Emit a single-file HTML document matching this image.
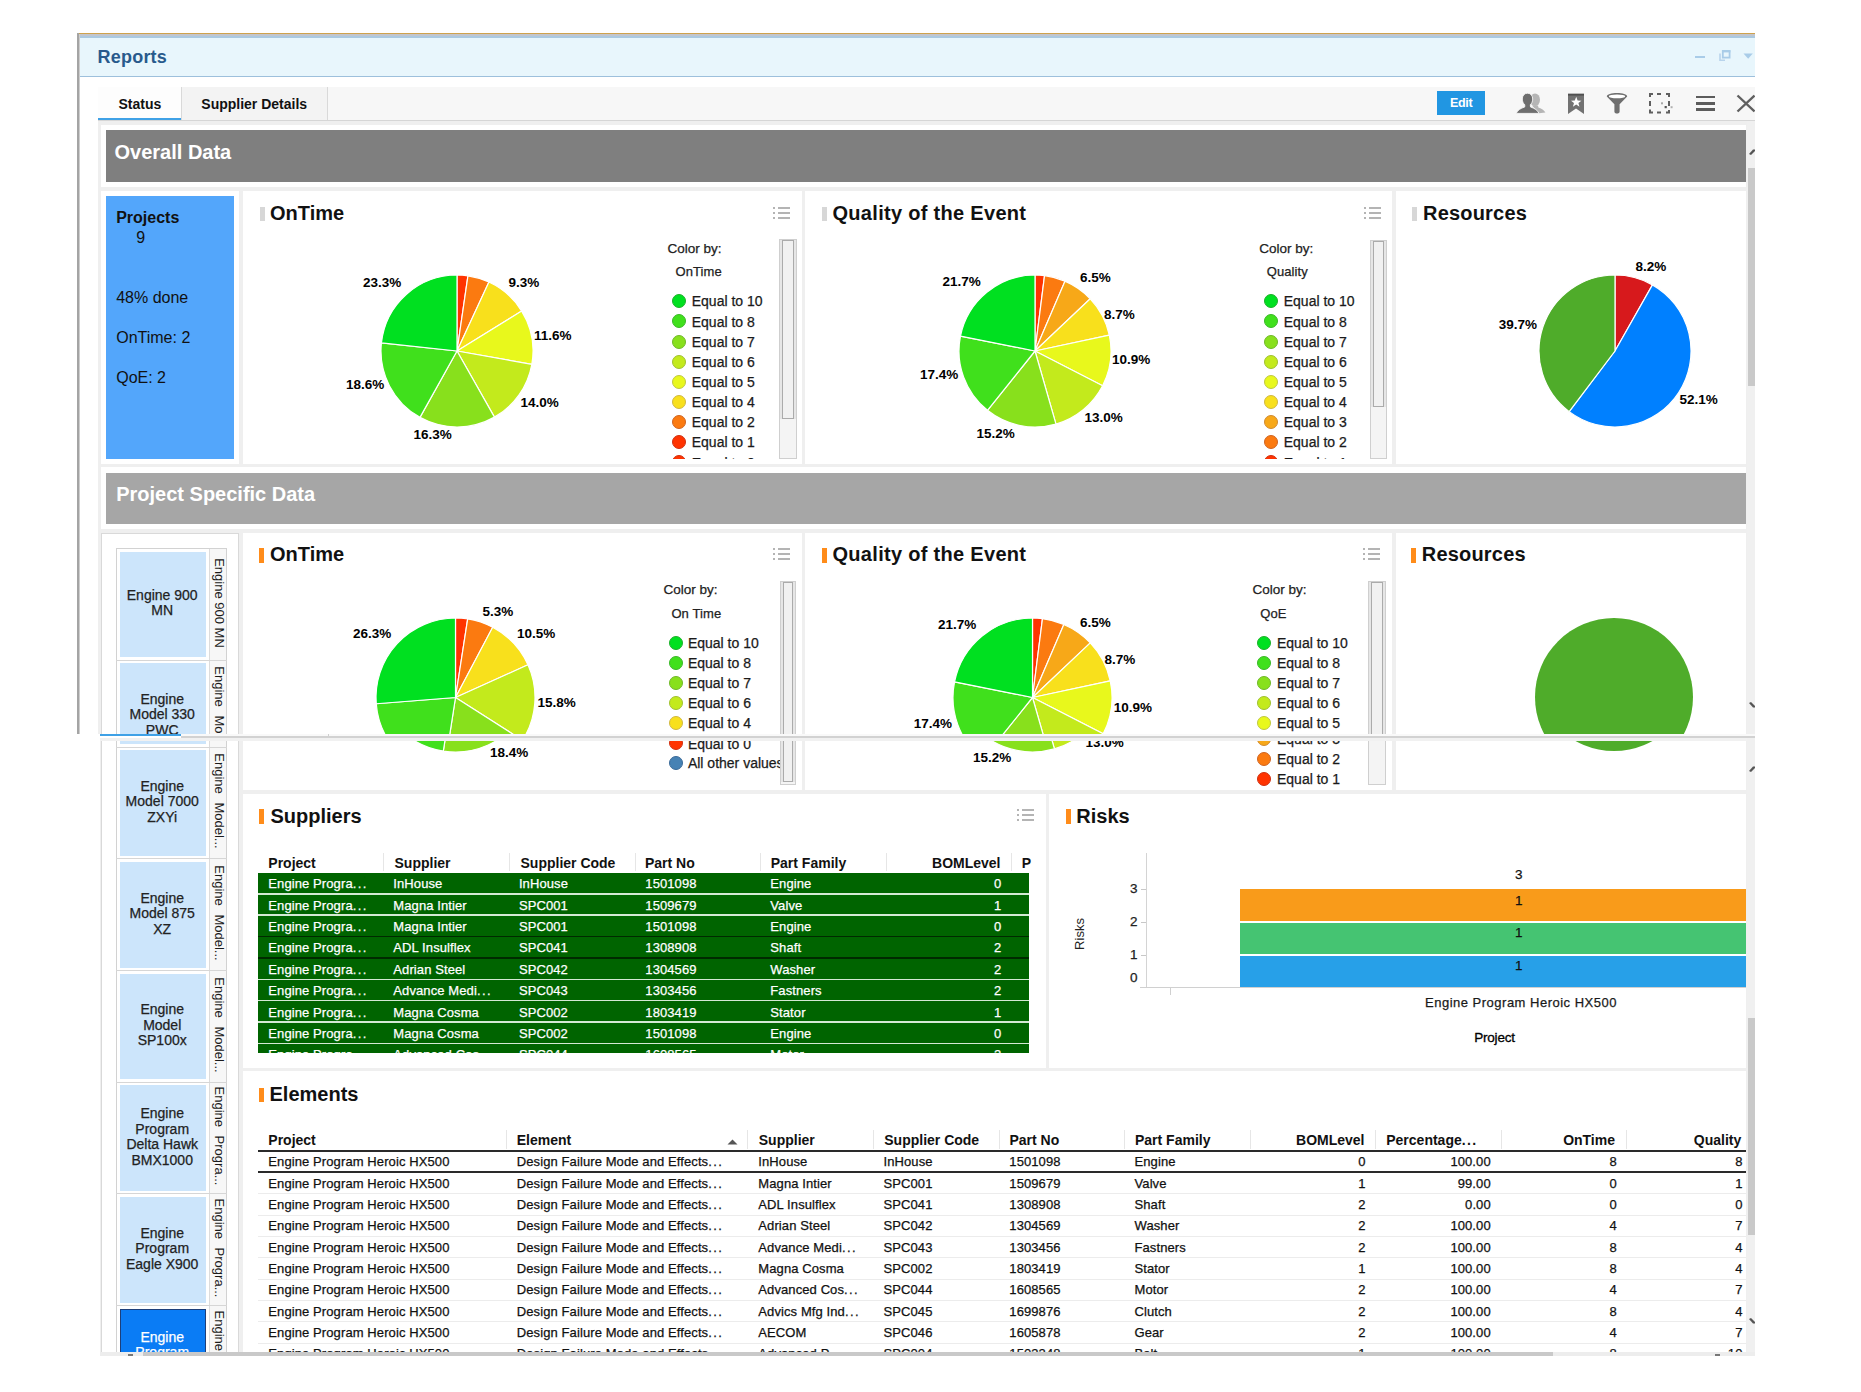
<!DOCTYPE html><html><head><meta charset="utf-8"><style>html,body{margin:0;padding:0}body{width:1861px;height:1392px;position:relative;overflow:hidden;background:#fff}</style></head><body>
<div style="position:absolute;left:0px;top:0px;width:1861px;height:734px;overflow:hidden"><div style="position:absolute;left:0px;top:0px;width:1861px;height:1392px">
<div style="position:absolute;left:77px;top:33px;width:1678px;height:1px;background:#cfa24c;"></div>
<div style="position:absolute;left:77px;top:34px;width:1678px;height:2px;background:#c2c5cc;"></div>
<div style="position:absolute;left:77px;top:36px;width:1678px;height:1.5px;background:#abc9e0;"></div>
<div style="position:absolute;left:77px;top:33px;width:1.5px;height:701px;background:#a4a4a4;"></div>
<div style="position:absolute;left:78.5px;top:34px;width:1.0px;height:700px;background:#cdcdcd;"></div>
<div style="position:absolute;left:79.5px;top:37.5px;width:1675.5px;height:38.5px;background:#e8f6fc;"></div>
<div style="position:absolute;left:79.5px;top:75.5px;width:1675.5px;height:1.5px;background:#9dc0dc;"></div>
<div style="position:absolute;left:97.6px;top:47.96px;font:bold 18px/18px 'Liberation Sans',sans-serif;color:#285a8c;white-space:nowrap;letter-spacing:0.2px">Reports</div>
<div style="position:absolute;left:1695px;top:55.5px;width:10px;height:2.5px;background:#a9cce8;"></div>
<svg style="position:absolute;left:1717px;top:49px" width="15" height="13" viewBox="0 0 15 13"><rect x="5.8" y="2" width="6.8" height="6.6" fill="none" stroke="#a9cce8" stroke-width="1.8"/><rect x="5" y="1.2" width="8.4" height="2.2" fill="#a9cce8"/><path d="M3,4.5 V11.2 H8" fill="none" stroke="#b8d4ec" stroke-width="1.6"/></svg>
<svg style="position:absolute;left:1743px;top:52.5px" width="11" height="7" viewBox="0 0 11 7"><path d="M0.5,0.5 H9.8 L5.15,5.8 Z" fill="#a9cce8"/></svg>
<div style="position:absolute;left:98px;top:87px;width:1657px;height:33px;background:#f7f7f7;"></div>
<div style="position:absolute;left:98px;top:87px;width:82.5px;height:31px;background:#fdfdfd;"></div>
<div style="position:absolute;left:180.5px;top:87px;width:1.0px;height:33px;background:#d9d9d9;"></div>
<div style="position:absolute;left:181.5px;top:87px;width:145.5px;height:33px;background:#f3f3f3;"></div>
<div style="position:absolute;left:327px;top:87px;width:1px;height:33px;background:#d9d9d9;"></div>
<div style="position:absolute;left:98px;top:118px;width:82.5px;height:2px;background:#3fa1e6;"></div>
<div style="position:absolute;left:98px;top:120px;width:1657px;height:1.2px;background:#d6d6d6;"></div>
<div style="position:absolute;left:118.5px;top:96.65px;font:bold 14px/14px 'Liberation Sans',sans-serif;color:#111;white-space:nowrap;">Status</div>
<div style="position:absolute;left:201.3px;top:96.65px;font:bold 14px/14px 'Liberation Sans',sans-serif;color:#111;white-space:nowrap;">Supplier Details</div>
<div style="position:absolute;left:1437.3px;top:90.8px;width:47.4px;height:24.7px;background:#2196e2;"></div>
<div style="position:absolute;left:961.2px;width:1000px;text-align:center;top:97.22px;font:bold 12.5px/12.5px 'Liberation Sans',sans-serif;color:#fff;white-space:nowrap;letter-spacing:-0.3px">Edit</div>
<svg style="position:absolute;left:1505px;top:85px" width="45" height="35" viewBox="0 0 45 35">
<ellipse cx="30" cy="14.8" rx="5" ry="6.3" fill="#b5b5b5"/>
<path d="M27,20.5 L33,20.5 L33.4,22.4 C37,23.6 39.6,25.4 40.4,27.6 L33.9,28.3 Z" fill="#b5b5b5"/>
<path d="M22.5,8.2 C25.8,8.2 27.7,10.8 27.7,14 C27.7,16.6 26.6,18.6 25.3,19.8 L25.5,22 C29.4,23.2 32.8,25.2 34,28.4 L11.2,28.4 C12.4,25.2 15.8,23.2 19.7,22 L19.8,19.8 C18.4,18.6 17.3,16.6 17.3,14 C17.3,10.8 19.2,8.2 22.5,8.2 Z" fill="#6e6e6e" stroke="#f7f7f7" stroke-width="0.9"/>
</svg>
<svg style="position:absolute;left:1567px;top:92.5px" width="18" height="22" viewBox="0 0 18 22">
<path d="M1,0.8 H17 V21 L9,15.6 L1,21 Z" fill="#727272"/><rect x="1" y="0.8" width="16" height="1.8" fill="#505050"/>
<path d="M9.2,3.8 L10.6,7.6 L14.4,7.7 L11.4,10.1 L12.5,13.8 L9.2,11.6 L5.9,13.8 L7,10.1 L4,7.7 L7.8,7.6 Z" fill="#fff"/>
</svg>
<svg style="position:absolute;left:1605px;top:92px" width="24" height="23" viewBox="0 0 24 23">
<path d="M1.8,4.5 C1.8,2.4 6.5,1.1 12,1.1 C17.5,1.1 22.2,2.4 22.2,4.5 L14.6,12.2 V19.8 C14.6,21 13.4,21.6 12,21.6 C10.6,21.6 9.4,21 9.4,19.8 V12.2 Z" fill="#6f6f6f"/>
<ellipse cx="12" cy="4.4" rx="8.2" ry="1.9" fill="#fff"/>
</svg>
<svg style="position:absolute;left:1648px;top:92px" width="28" height="23" viewBox="0 0 28 23">
<g stroke="#5f5f5f" stroke-width="2" fill="none">
<path d="M2,5 V2 H5"/><path d="M9,2 H13"/><path d="M18,2 H21 V5"/><path d="M2,9 V14"/><path d="M21,9 V14"/><path d="M2,17.5 V20.5 H5"/><path d="M9,20.5 H13"/><path d="M18,20.5 H21 V18"/>
</g>
<rect x="13" y="10.3" width="2" height="2" fill="#a8a8a8"/><rect x="16.6" y="14" width="2.2" height="2.2" fill="#555"/><rect x="22.6" y="14.2" width="2" height="2" fill="#b0b0b0"/>
</svg>
<div style="position:absolute;left:1696px;top:95.6px;width:19px;height:2.6px;background:#5c5c5c;"></div>
<div style="position:absolute;left:1696px;top:102px;width:19px;height:2.6px;background:#5c5c5c;"></div>
<div style="position:absolute;left:1696px;top:108.3px;width:19px;height:2.6px;background:#5c5c5c;"></div>
<svg style="position:absolute;left:1736px;top:94px" width="19" height="19" viewBox="0 0 19 19">
<path d="M1.5,1.5 L18.5,17.5 M18.5,1.5 L1.5,17.5" stroke="#606060" stroke-width="2.4"/></svg>
<div style="position:absolute;left:98px;top:121.2px;width:1649px;height:612.8px;background:#efefef;"></div>
<div style="position:absolute;left:1747px;top:121.2px;width:8px;height:612.8px;background:#f0f0f0;"></div>
<div style="position:absolute;left:1748px;top:167.5px;width:7px;height:218.5px;background:#c9c9c9;"></div>
<svg style="position:absolute;left:1748px;top:147px" width="7" height="10" viewBox="0 0 7 10"><path d="M1,7 L5,2.5 L7,2.5 L7,4 L3,8 Z" fill="#555"/></svg>
<svg style="position:absolute;left:1748px;top:701px" width="7" height="10" viewBox="0 0 7 10"><path d="M1,2 L5,6.5 L7,6.5 L7,5 L3,1 Z" fill="#555"/></svg>
<div style="position:absolute;left:101px;top:124.5px;width:1645px;height:62.5px;background:#ffffff;"></div>
<div style="position:absolute;left:106px;top:130px;width:1640px;height:52px;background:#7f7f7f;"></div>
<div style="position:absolute;left:114.5px;top:141.87px;font:bold 20px/20px 'Liberation Sans',sans-serif;color:#fff;white-space:nowrap;">Overall Data</div>
<div style="position:absolute;left:101px;top:191px;width:138px;height:273px;background:#fff;"></div>
<div style="position:absolute;left:106px;top:196.2px;width:128px;height:262.6px;background:#53a6fb;"></div>
<div style="position:absolute;left:116.2px;top:209.76px;font:bold 16px/16px 'Liberation Sans',sans-serif;color:#111;white-space:nowrap;">Projects</div>
<div style="position:absolute;left:136.2px;top:229.76px;font:normal 16px/16px 'Liberation Sans',sans-serif;color:#111;white-space:nowrap;">9</div>
<div style="position:absolute;left:116.2px;top:290.26px;font:normal 16px/16px 'Liberation Sans',sans-serif;color:#111;white-space:nowrap;">48% done</div>
<div style="position:absolute;left:116.2px;top:330.26px;font:normal 16px/16px 'Liberation Sans',sans-serif;color:#111;white-space:nowrap;">OnTime: 2</div>
<div style="position:absolute;left:116.2px;top:370.26px;font:normal 16px/16px 'Liberation Sans',sans-serif;color:#111;white-space:nowrap;">QoE: 2</div>
<div style="position:absolute;left:242.5px;top:191px;width:559.5px;height:273px;background:#fff;"></div>
<div style="position:absolute;left:259.5px;top:206.8px;width:5px;height:14.5px;background:#d7d7d7;"></div>
<div style="position:absolute;left:270px;top:203.07px;font:bold 20px/20px 'Liberation Sans',sans-serif;color:#111;white-space:nowrap;">OnTime</div>
<div style="position:absolute;left:773px;top:206.6px;width:2px;height:2px;background:#b4b4b4;"></div>
<div style="position:absolute;left:778px;top:206.6px;width:12px;height:2px;background:#b4b4b4;"></div>
<div style="position:absolute;left:773px;top:211.6px;width:2px;height:2px;background:#b4b4b4;"></div>
<div style="position:absolute;left:778px;top:211.6px;width:12px;height:2px;background:#b4b4b4;"></div>
<div style="position:absolute;left:773px;top:216.6px;width:2px;height:2px;background:#b4b4b4;"></div>
<div style="position:absolute;left:778px;top:216.6px;width:12px;height:2px;background:#b4b4b4;"></div>
<svg style="position:absolute;left:379.2px;top:272.5px" width="156" height="156" viewBox="0 0 156 156"><path d="M78,78 L78.00,2.00 A76,76 0 0 1 88.94,2.79 Z" fill="#ff3300" stroke="#fff" stroke-width="1.2" stroke-linejoin="round"/><path d="M78,78 L88.94,2.79 A76,76 0 0 1 109.93,9.03 Z" fill="#fb7a10" stroke="#fff" stroke-width="1.2" stroke-linejoin="round"/><path d="M78,78 L109.93,9.03 A76,76 0 0 1 142.68,38.09 Z" fill="#f8e01c" stroke="#fff" stroke-width="1.2" stroke-linejoin="round"/><path d="M78,78 L142.68,38.09 A76,76 0 0 1 152.83,91.30 Z" fill="#e8f81c" stroke="#fff" stroke-width="1.2" stroke-linejoin="round"/><path d="M78,78 L152.83,91.30 A76,76 0 0 1 115.45,144.13 Z" fill="#c3ea1c" stroke="#fff" stroke-width="1.2" stroke-linejoin="round"/><path d="M78,78 L115.45,144.13 A76,76 0 0 1 40.97,144.37 Z" fill="#88e01c" stroke="#fff" stroke-width="1.2" stroke-linejoin="round"/><path d="M78,78 L40.97,144.37 A76,76 0 0 1 2.43,69.90 Z" fill="#40e01c" stroke="#fff" stroke-width="1.2" stroke-linejoin="round"/><path d="M78,78 L2.43,69.90 A76,76 0 0 1 78.00,2.00 Z" fill="#00e020" stroke="#fff" stroke-width="1.2" stroke-linejoin="round"/></svg>
<div style="position:absolute;left:363px;top:276.27px;font:bold 13.5px/13.5px 'Liberation Sans',sans-serif;color:#000;white-space:nowrap;">23.3%</div>
<div style="position:absolute;left:508.5px;top:276.27px;font:bold 13.5px/13.5px 'Liberation Sans',sans-serif;color:#000;white-space:nowrap;">9.3%</div>
<div style="position:absolute;left:534px;top:329.27px;font:bold 13.5px/13.5px 'Liberation Sans',sans-serif;color:#000;white-space:nowrap;">11.6%</div>
<div style="position:absolute;left:520.5px;top:395.77px;font:bold 13.5px/13.5px 'Liberation Sans',sans-serif;color:#000;white-space:nowrap;">14.0%</div>
<div style="position:absolute;left:413.5px;top:428.27px;font:bold 13.5px/13.5px 'Liberation Sans',sans-serif;color:#000;white-space:nowrap;">16.3%</div>
<div style="position:absolute;left:346px;top:378.27px;font:bold 13.5px/13.5px 'Liberation Sans',sans-serif;color:#000;white-space:nowrap;">18.6%</div>
<div style="position:absolute;left:667.5px;top:241.57px;font:normal 13.5px/13.5px 'Liberation Sans',sans-serif;color:#222;white-space:nowrap;;-webkit-text-stroke:0.25px">Color by:</div>
<div style="position:absolute;left:675.5px;top:265.4px;font:normal 13px/13px 'Liberation Sans',sans-serif;color:#222;white-space:nowrap;;-webkit-text-stroke:0.25px;letter-spacing:0.1px">OnTime</div>
<div style="position:absolute;left:660px;top:285px;width:119px;height:174px;overflow:hidden"><div style="position:absolute;left:-660px;top:-285px;width:1861px;height:1392px">
<div style="position:absolute;left:672.25px;top:294.25px;width:12px;height:12px;border-radius:50%;background:#00e020;border:1px solid #1cb02a"></div>
<div style="position:absolute;left:691.75px;top:294.4px;font:normal 14px/14px 'Liberation Sans',sans-serif;color:#1a1a1a;white-space:nowrap;;-webkit-text-stroke:0.25px">Equal to 10</div>
<div style="position:absolute;left:672.25px;top:314.4px;width:12px;height:12px;border-radius:50%;background:#40e01c;border:1px solid #3ab828"></div>
<div style="position:absolute;left:691.75px;top:314.55px;font:normal 14px/14px 'Liberation Sans',sans-serif;color:#1a1a1a;white-space:nowrap;;-webkit-text-stroke:0.25px">Equal to 8</div>
<div style="position:absolute;left:672.25px;top:334.55px;width:12px;height:12px;border-radius:50%;background:#88e01c;border:1px solid #70b828"></div>
<div style="position:absolute;left:691.75px;top:334.7px;font:normal 14px/14px 'Liberation Sans',sans-serif;color:#1a1a1a;white-space:nowrap;;-webkit-text-stroke:0.25px">Equal to 7</div>
<div style="position:absolute;left:672.25px;top:354.7px;width:12px;height:12px;border-radius:50%;background:#c3ea1c;border:1px solid #a0c030"></div>
<div style="position:absolute;left:691.75px;top:354.85px;font:normal 14px/14px 'Liberation Sans',sans-serif;color:#1a1a1a;white-space:nowrap;;-webkit-text-stroke:0.25px">Equal to 6</div>
<div style="position:absolute;left:672.25px;top:374.85px;width:12px;height:12px;border-radius:50%;background:#e8f81c;border:1px solid #c0c840"></div>
<div style="position:absolute;left:691.75px;top:375.0px;font:normal 14px/14px 'Liberation Sans',sans-serif;color:#1a1a1a;white-space:nowrap;;-webkit-text-stroke:0.25px">Equal to 5</div>
<div style="position:absolute;left:672.25px;top:395.0px;width:12px;height:12px;border-radius:50%;background:#f8e01c;border:1px solid #d0b840"></div>
<div style="position:absolute;left:691.75px;top:395.15px;font:normal 14px/14px 'Liberation Sans',sans-serif;color:#1a1a1a;white-space:nowrap;;-webkit-text-stroke:0.25px">Equal to 4</div>
<div style="position:absolute;left:672.25px;top:415.15px;width:12px;height:12px;border-radius:50%;background:#fb7a10;border:1px solid #d06420"></div>
<div style="position:absolute;left:691.75px;top:415.3px;font:normal 14px/14px 'Liberation Sans',sans-serif;color:#1a1a1a;white-space:nowrap;;-webkit-text-stroke:0.25px">Equal to 2</div>
<div style="position:absolute;left:672.25px;top:435.3px;width:12px;height:12px;border-radius:50%;background:#ff3300;border:1px solid #d03010"></div>
<div style="position:absolute;left:691.75px;top:435.45px;font:normal 14px/14px 'Liberation Sans',sans-serif;color:#1a1a1a;white-space:nowrap;;-webkit-text-stroke:0.25px">Equal to 1</div>
<div style="position:absolute;left:672.25px;top:455.45px;width:12px;height:12px;border-radius:50%;background:#ff3300;border:1px solid #d03010"></div>
<div style="position:absolute;left:691.75px;top:455.6px;font:normal 14px/14px 'Liberation Sans',sans-serif;color:#1a1a1a;white-space:nowrap;;-webkit-text-stroke:0.25px">Equal to 0</div>
</div></div>
<div style="position:absolute;left:779px;top:239.2px;width:18px;height:219.8px;background:#f4f4f4;box-sizing:border-box;border:1px solid #cfcfcf"></div>
<div style="position:absolute;left:780px;top:240.2px;width:16px;height:179.3px;background:#e6e6e6;"></div>
<div style="position:absolute;left:782px;top:240.2px;width:12px;height:179.3px;background:#f1f1f1;box-sizing:border-box;border:1px solid #ababab"></div>
<div style="position:absolute;left:805px;top:191px;width:587px;height:273px;background:#fff;"></div>
<div style="position:absolute;left:822px;top:206.8px;width:5px;height:14.5px;background:#d7d7d7;"></div>
<div style="position:absolute;left:832.5px;top:203.07px;font:bold 20px/20px 'Liberation Sans',sans-serif;color:#111;white-space:nowrap;letter-spacing:0.3px">Quality of the Event</div>
<div style="position:absolute;left:1363.5px;top:206.6px;width:2px;height:2px;background:#b4b4b4;"></div>
<div style="position:absolute;left:1368.5px;top:206.6px;width:12px;height:2px;background:#b4b4b4;"></div>
<div style="position:absolute;left:1363.5px;top:211.6px;width:2px;height:2px;background:#b4b4b4;"></div>
<div style="position:absolute;left:1368.5px;top:211.6px;width:12px;height:2px;background:#b4b4b4;"></div>
<div style="position:absolute;left:1363.5px;top:216.6px;width:2px;height:2px;background:#b4b4b4;"></div>
<div style="position:absolute;left:1368.5px;top:216.6px;width:12px;height:2px;background:#b4b4b4;"></div>
<svg style="position:absolute;left:956.5px;top:272.75px" width="156" height="156" viewBox="0 0 156 156"><path d="M78,78 L78.00,2.00 A76,76 0 0 1 87.53,2.60 Z" fill="#ff3300" stroke="#fff" stroke-width="1.2" stroke-linejoin="round"/><path d="M78,78 L87.53,2.60 A76,76 0 0 1 107.96,8.16 Z" fill="#fb7a10" stroke="#fff" stroke-width="1.2" stroke-linejoin="round"/><path d="M78,78 L107.96,8.16 A76,76 0 0 1 133.24,25.80 Z" fill="#f7a818" stroke="#fff" stroke-width="1.2" stroke-linejoin="round"/><path d="M78,78 L133.24,25.80 A76,76 0 0 1 152.32,62.12 Z" fill="#f8e01c" stroke="#fff" stroke-width="1.2" stroke-linejoin="round"/><path d="M78,78 L152.32,62.12 A76,76 0 0 1 145.61,112.72 Z" fill="#e8f81c" stroke="#fff" stroke-width="1.2" stroke-linejoin="round"/><path d="M78,78 L145.61,112.72 A76,76 0 0 1 98.97,151.05 Z" fill="#c3ea1c" stroke="#fff" stroke-width="1.2" stroke-linejoin="round"/><path d="M78,78 L98.97,151.05 A76,76 0 0 1 30.48,137.31 Z" fill="#88e01c" stroke="#fff" stroke-width="1.2" stroke-linejoin="round"/><path d="M78,78 L30.48,137.31 A76,76 0 0 1 3.48,63.06 Z" fill="#40e01c" stroke="#fff" stroke-width="1.2" stroke-linejoin="round"/><path d="M78,78 L3.48,63.06 A76,76 0 0 1 78.00,2.00 Z" fill="#00e020" stroke="#fff" stroke-width="1.2" stroke-linejoin="round"/></svg>
<div style="position:absolute;left:942.5px;top:274.77px;font:bold 13.5px/13.5px 'Liberation Sans',sans-serif;color:#000;white-space:nowrap;">21.7%</div>
<div style="position:absolute;left:1080px;top:271.27px;font:bold 13.5px/13.5px 'Liberation Sans',sans-serif;color:#000;white-space:nowrap;">6.5%</div>
<div style="position:absolute;left:1104px;top:307.77px;font:bold 13.5px/13.5px 'Liberation Sans',sans-serif;color:#000;white-space:nowrap;">8.7%</div>
<div style="position:absolute;left:1112px;top:352.77px;font:bold 13.5px/13.5px 'Liberation Sans',sans-serif;color:#000;white-space:nowrap;">10.9%</div>
<div style="position:absolute;left:1084.5px;top:410.77px;font:bold 13.5px/13.5px 'Liberation Sans',sans-serif;color:#000;white-space:nowrap;">13.0%</div>
<div style="position:absolute;left:976.5px;top:427.27px;font:bold 13.5px/13.5px 'Liberation Sans',sans-serif;color:#000;white-space:nowrap;">15.2%</div>
<div style="position:absolute;left:920px;top:367.77px;font:bold 13.5px/13.5px 'Liberation Sans',sans-serif;color:#000;white-space:nowrap;">17.4%</div>
<div style="position:absolute;left:1259.25px;top:241.57px;font:normal 13.5px/13.5px 'Liberation Sans',sans-serif;color:#222;white-space:nowrap;;-webkit-text-stroke:0.25px">Color by:</div>
<div style="position:absolute;left:1266.75px;top:265.4px;font:normal 13px/13px 'Liberation Sans',sans-serif;color:#222;white-space:nowrap;;-webkit-text-stroke:0.25px;letter-spacing:0.1px">Quality</div>
<div style="position:absolute;left:1250px;top:285px;width:119px;height:174px;overflow:hidden"><div style="position:absolute;left:-1250px;top:-285px;width:1861px;height:1392px">
<div style="position:absolute;left:1264.25px;top:294.25px;width:12px;height:12px;border-radius:50%;background:#00e020;border:1px solid #1cb02a"></div>
<div style="position:absolute;left:1283.75px;top:294.4px;font:normal 14px/14px 'Liberation Sans',sans-serif;color:#1a1a1a;white-space:nowrap;;-webkit-text-stroke:0.25px">Equal to 10</div>
<div style="position:absolute;left:1264.25px;top:314.4px;width:12px;height:12px;border-radius:50%;background:#40e01c;border:1px solid #3ab828"></div>
<div style="position:absolute;left:1283.75px;top:314.55px;font:normal 14px/14px 'Liberation Sans',sans-serif;color:#1a1a1a;white-space:nowrap;;-webkit-text-stroke:0.25px">Equal to 8</div>
<div style="position:absolute;left:1264.25px;top:334.55px;width:12px;height:12px;border-radius:50%;background:#88e01c;border:1px solid #70b828"></div>
<div style="position:absolute;left:1283.75px;top:334.7px;font:normal 14px/14px 'Liberation Sans',sans-serif;color:#1a1a1a;white-space:nowrap;;-webkit-text-stroke:0.25px">Equal to 7</div>
<div style="position:absolute;left:1264.25px;top:354.7px;width:12px;height:12px;border-radius:50%;background:#c3ea1c;border:1px solid #a0c030"></div>
<div style="position:absolute;left:1283.75px;top:354.85px;font:normal 14px/14px 'Liberation Sans',sans-serif;color:#1a1a1a;white-space:nowrap;;-webkit-text-stroke:0.25px">Equal to 6</div>
<div style="position:absolute;left:1264.25px;top:374.85px;width:12px;height:12px;border-radius:50%;background:#e8f81c;border:1px solid #c0c840"></div>
<div style="position:absolute;left:1283.75px;top:375.0px;font:normal 14px/14px 'Liberation Sans',sans-serif;color:#1a1a1a;white-space:nowrap;;-webkit-text-stroke:0.25px">Equal to 5</div>
<div style="position:absolute;left:1264.25px;top:395.0px;width:12px;height:12px;border-radius:50%;background:#f8e01c;border:1px solid #d0b840"></div>
<div style="position:absolute;left:1283.75px;top:395.15px;font:normal 14px/14px 'Liberation Sans',sans-serif;color:#1a1a1a;white-space:nowrap;;-webkit-text-stroke:0.25px">Equal to 4</div>
<div style="position:absolute;left:1264.25px;top:415.15px;width:12px;height:12px;border-radius:50%;background:#f7a818;border:1px solid #d08a30"></div>
<div style="position:absolute;left:1283.75px;top:415.3px;font:normal 14px/14px 'Liberation Sans',sans-serif;color:#1a1a1a;white-space:nowrap;;-webkit-text-stroke:0.25px">Equal to 3</div>
<div style="position:absolute;left:1264.25px;top:435.3px;width:12px;height:12px;border-radius:50%;background:#fb7a10;border:1px solid #d06420"></div>
<div style="position:absolute;left:1283.75px;top:435.45px;font:normal 14px/14px 'Liberation Sans',sans-serif;color:#1a1a1a;white-space:nowrap;;-webkit-text-stroke:0.25px">Equal to 2</div>
<div style="position:absolute;left:1264.25px;top:455.45px;width:12px;height:12px;border-radius:50%;background:#ff3300;border:1px solid #d03010"></div>
<div style="position:absolute;left:1283.75px;top:455.6px;font:normal 14px/14px 'Liberation Sans',sans-serif;color:#1a1a1a;white-space:nowrap;;-webkit-text-stroke:0.25px">Equal to 1</div>
</div></div>
<div style="position:absolute;left:1369.5px;top:239.5px;width:17.25px;height:219.5px;background:#f4f4f4;box-sizing:border-box;border:1px solid #cfcfcf"></div>
<div style="position:absolute;left:1370.5px;top:240.5px;width:15.25px;height:166.5px;background:#e6e6e6;"></div>
<div style="position:absolute;left:1372.5px;top:240.5px;width:11.25px;height:166.5px;background:#f1f1f1;box-sizing:border-box;border:1px solid #ababab"></div>
<div style="position:absolute;left:1395.5px;top:191px;width:350.5px;height:273px;background:#fff;"></div>
<div style="position:absolute;left:1412px;top:206.8px;width:5px;height:14.5px;background:#d7d7d7;"></div>
<div style="position:absolute;left:1423px;top:203.07px;font:bold 20px/20px 'Liberation Sans',sans-serif;color:#111;white-space:nowrap;letter-spacing:0.2px">Resources</div>
<svg style="position:absolute;left:1537px;top:272.75px" width="156" height="156" viewBox="0 0 156 156"><path d="M78,78 L78.00,2.00 A76,76 0 0 1 115.45,11.87 Z" fill="#d7191c" stroke="#fff" stroke-width="1.2" stroke-linejoin="round"/><path d="M78,78 L115.45,11.87 A76,76 0 1 1 32.18,138.63 Z" fill="#0080ff" stroke="#fff" stroke-width="1.2" stroke-linejoin="round"/><path d="M78,78 L32.18,138.63 A76,76 0 0 1 78.00,2.00 Z" fill="#4fac2a" stroke="#fff" stroke-width="1.2" stroke-linejoin="round"/></svg>
<div style="position:absolute;left:1635.5px;top:260.27px;font:bold 13.5px/13.5px 'Liberation Sans',sans-serif;color:#000;white-space:nowrap;">8.2%</div>
<div style="position:absolute;left:1498.75px;top:318.27px;font:bold 13.5px/13.5px 'Liberation Sans',sans-serif;color:#000;white-space:nowrap;">39.7%</div>
<div style="position:absolute;left:1679.5px;top:393.27px;font:bold 13.5px/13.5px 'Liberation Sans',sans-serif;color:#000;white-space:nowrap;">52.1%</div>
<div style="position:absolute;left:101px;top:467px;width:1645px;height:62px;background:#fff;"></div>
<div style="position:absolute;left:106px;top:472.5px;width:1640px;height:51.5px;background:#a6a6a6;"></div>
<div style="position:absolute;left:116.2px;top:484.37px;font:bold 20px/20px 'Liberation Sans',sans-serif;color:#fff;white-space:nowrap;">Project Specific Data</div>
<div style="position:absolute;left:101px;top:533px;width:138px;height:867px;background:#fff;box-sizing:border-box;border:1px solid #d9d9d9;border-bottom:none"></div>
<div style="position:absolute;left:116.4px;top:548.4px;width:110.9px;height:851.6px;background:#fff;box-sizing:border-box;border:1px solid #d2d2d2;border-bottom:none"></div>
<div style="position:absolute;left:209.1px;top:549.4px;width:1.0px;height:850.6px;background:#dcdcdc;"></div>
<div style="position:absolute;left:210.1px;top:549.4px;width:16.2px;height:850.6px;background:#f7f7f7;"></div>
<div style="position:absolute;left:116.4px;top:659.5px;width:110.9px;height:1.0px;background:#d6d6d6;"></div>
<div style="position:absolute;left:119.7px;top:551.5px;width:86.7px;height:105.8px;background:#cce5fb;"></div>
<div style="position:absolute;left:-337.8px;width:1000px;text-align:center;top:587.8px;font:normal 14px/14px 'Liberation Sans',sans-serif;color:#222;white-space:nowrap;;-webkit-text-stroke:0.25px">Engine 900</div>
<div style="position:absolute;left:-337.8px;width:1000px;text-align:center;top:603.3px;font:normal 14px/14px 'Liberation Sans',sans-serif;color:#222;white-space:nowrap;;-webkit-text-stroke:0.25px">MN</div>
<div style="position:absolute;left:225.8px;top:549.5px;width:106px;text-align:center;transform:rotate(90deg);transform-origin:0 0;font:normal 13px/13px 'Liberation Sans',sans-serif;color:#1a1a1a;white-space:nowrap;">Engine 900 MN</div>
<div style="position:absolute;left:116.4px;top:771.2px;width:110.9px;height:1.0px;background:#d6d6d6;"></div>
<div style="position:absolute;left:119.7px;top:663.2px;width:86.7px;height:105.8px;background:#cce5fb;"></div>
<div style="position:absolute;left:-337.8px;width:1000px;text-align:center;top:691.75px;font:normal 14px/14px 'Liberation Sans',sans-serif;color:#222;white-space:nowrap;;-webkit-text-stroke:0.25px">Engine</div>
<div style="position:absolute;left:-337.8px;width:1000px;text-align:center;top:707.25px;font:normal 14px/14px 'Liberation Sans',sans-serif;color:#222;white-space:nowrap;;-webkit-text-stroke:0.25px">Model 330</div>
<div style="position:absolute;left:-337.8px;width:1000px;text-align:center;top:722.75px;font:normal 14px/14px 'Liberation Sans',sans-serif;color:#222;white-space:nowrap;;-webkit-text-stroke:0.25px">PWC</div>
<div style="position:absolute;left:225.8px;top:661.2px;width:106px;text-align:center;transform:rotate(90deg);transform-origin:0 0;font:normal 13px/13px 'Liberation Sans',sans-serif;color:#1a1a1a;white-space:nowrap;word-spacing:5px;">Engine Model...</div>
<div style="position:absolute;left:116.4px;top:882.9px;width:110.9px;height:1.0px;background:#d6d6d6;"></div>
<div style="position:absolute;left:119.7px;top:774.9px;width:86.7px;height:105.8px;background:#cce5fb;"></div>
<div style="position:absolute;left:-337.8px;width:1000px;text-align:center;top:803.45px;font:normal 14px/14px 'Liberation Sans',sans-serif;color:#222;white-space:nowrap;;-webkit-text-stroke:0.25px">Engine</div>
<div style="position:absolute;left:-337.8px;width:1000px;text-align:center;top:818.95px;font:normal 14px/14px 'Liberation Sans',sans-serif;color:#222;white-space:nowrap;;-webkit-text-stroke:0.25px">Model 7000</div>
<div style="position:absolute;left:-337.8px;width:1000px;text-align:center;top:834.45px;font:normal 14px/14px 'Liberation Sans',sans-serif;color:#222;white-space:nowrap;;-webkit-text-stroke:0.25px">ZXYi</div>
<div style="position:absolute;left:225.8px;top:772.9px;width:106px;text-align:center;transform:rotate(90deg);transform-origin:0 0;font:normal 13px/13px 'Liberation Sans',sans-serif;color:#1a1a1a;white-space:nowrap;word-spacing:5px;">Engine Model...</div>
<div style="position:absolute;left:116.4px;top:994.6px;width:110.9px;height:1.0px;background:#d6d6d6;"></div>
<div style="position:absolute;left:119.7px;top:886.6px;width:86.7px;height:105.8px;background:#cce5fb;"></div>
<div style="position:absolute;left:-337.8px;width:1000px;text-align:center;top:915.15px;font:normal 14px/14px 'Liberation Sans',sans-serif;color:#222;white-space:nowrap;;-webkit-text-stroke:0.25px">Engine</div>
<div style="position:absolute;left:-337.8px;width:1000px;text-align:center;top:930.65px;font:normal 14px/14px 'Liberation Sans',sans-serif;color:#222;white-space:nowrap;;-webkit-text-stroke:0.25px">Model 875</div>
<div style="position:absolute;left:-337.8px;width:1000px;text-align:center;top:946.15px;font:normal 14px/14px 'Liberation Sans',sans-serif;color:#222;white-space:nowrap;;-webkit-text-stroke:0.25px">XZ</div>
<div style="position:absolute;left:225.8px;top:884.6px;width:106px;text-align:center;transform:rotate(90deg);transform-origin:0 0;font:normal 13px/13px 'Liberation Sans',sans-serif;color:#1a1a1a;white-space:nowrap;word-spacing:5px;">Engine Model...</div>
<div style="position:absolute;left:116.4px;top:1106.3px;width:110.9px;height:1.0px;background:#d6d6d6;"></div>
<div style="position:absolute;left:119.7px;top:998.3px;width:86.7px;height:105.8px;background:#cce5fb;"></div>
<div style="position:absolute;left:-337.8px;width:1000px;text-align:center;top:1026.85px;font:normal 14px/14px 'Liberation Sans',sans-serif;color:#222;white-space:nowrap;;-webkit-text-stroke:0.25px">Engine</div>
<div style="position:absolute;left:-337.8px;width:1000px;text-align:center;top:1042.35px;font:normal 14px/14px 'Liberation Sans',sans-serif;color:#222;white-space:nowrap;;-webkit-text-stroke:0.25px">Model</div>
<div style="position:absolute;left:-337.8px;width:1000px;text-align:center;top:1057.85px;font:normal 14px/14px 'Liberation Sans',sans-serif;color:#222;white-space:nowrap;;-webkit-text-stroke:0.25px">SP100x</div>
<div style="position:absolute;left:225.8px;top:996.3px;width:106px;text-align:center;transform:rotate(90deg);transform-origin:0 0;font:normal 13px/13px 'Liberation Sans',sans-serif;color:#1a1a1a;white-space:nowrap;word-spacing:5px;">Engine Model...</div>
<div style="position:absolute;left:116.4px;top:1218.0px;width:110.9px;height:1.0px;background:#d6d6d6;"></div>
<div style="position:absolute;left:119.7px;top:1110.0px;width:86.7px;height:105.8px;background:#cce5fb;"></div>
<div style="position:absolute;left:-337.8px;width:1000px;text-align:center;top:1130.8px;font:normal 14px/14px 'Liberation Sans',sans-serif;color:#222;white-space:nowrap;;-webkit-text-stroke:0.25px">Engine</div>
<div style="position:absolute;left:-337.8px;width:1000px;text-align:center;top:1146.3px;font:normal 14px/14px 'Liberation Sans',sans-serif;color:#222;white-space:nowrap;;-webkit-text-stroke:0.25px">Program</div>
<div style="position:absolute;left:-337.8px;width:1000px;text-align:center;top:1161.8px;font:normal 14px/14px 'Liberation Sans',sans-serif;color:#222;white-space:nowrap;;-webkit-text-stroke:0.25px">Delta Hawk</div>
<div style="position:absolute;left:-337.8px;width:1000px;text-align:center;top:1177.3px;font:normal 14px/14px 'Liberation Sans',sans-serif;color:#222;white-space:nowrap;;-webkit-text-stroke:0.25px">BMX1000</div>
<div style="position:absolute;left:225.8px;top:1108.0px;width:106px;text-align:center;transform:rotate(90deg);transform-origin:0 0;font:normal 13px/13px 'Liberation Sans',sans-serif;color:#1a1a1a;white-space:nowrap;word-spacing:5px;">Engine Progra...</div>
<div style="position:absolute;left:116.4px;top:1329.7px;width:110.9px;height:1.0px;background:#d6d6d6;"></div>
<div style="position:absolute;left:119.7px;top:1221.7px;width:86.7px;height:105.8px;background:#cce5fb;"></div>
<div style="position:absolute;left:-337.8px;width:1000px;text-align:center;top:1250.25px;font:normal 14px/14px 'Liberation Sans',sans-serif;color:#222;white-space:nowrap;;-webkit-text-stroke:0.25px">Engine</div>
<div style="position:absolute;left:-337.8px;width:1000px;text-align:center;top:1265.75px;font:normal 14px/14px 'Liberation Sans',sans-serif;color:#222;white-space:nowrap;;-webkit-text-stroke:0.25px">Program</div>
<div style="position:absolute;left:-337.8px;width:1000px;text-align:center;top:1281.25px;font:normal 14px/14px 'Liberation Sans',sans-serif;color:#222;white-space:nowrap;;-webkit-text-stroke:0.25px">Eagle X900</div>
<div style="position:absolute;left:225.8px;top:1219.7px;width:106px;text-align:center;transform:rotate(90deg);transform-origin:0 0;font:normal 13px/13px 'Liberation Sans',sans-serif;color:#1a1a1a;white-space:nowrap;word-spacing:5px;">Engine Progra...</div>
<div style="position:absolute;left:116.4px;top:1441.4px;width:110.9px;height:1.0px;background:#d6d6d6;"></div>
<div style="position:absolute;left:119.7px;top:1333.4px;width:86.7px;height:105.8px;background:#0a7cf5;box-sizing:border-box;border:1px solid #1d3f7a"></div>
<div style="position:absolute;left:-337.8px;width:1000px;text-align:center;top:1354.2px;font:normal 14px/14px 'Liberation Sans',sans-serif;color:#fff;white-space:nowrap;;-webkit-text-stroke:0.25px">Engine</div>
<div style="position:absolute;left:-337.8px;width:1000px;text-align:center;top:1369.7px;font:normal 14px/14px 'Liberation Sans',sans-serif;color:#fff;white-space:nowrap;;-webkit-text-stroke:0.25px">Program</div>
<div style="position:absolute;left:-337.8px;width:1000px;text-align:center;top:1385.2px;font:normal 14px/14px 'Liberation Sans',sans-serif;color:#fff;white-space:nowrap;;-webkit-text-stroke:0.25px">Heroic</div>
<div style="position:absolute;left:-337.8px;width:1000px;text-align:center;top:1400.7px;font:normal 14px/14px 'Liberation Sans',sans-serif;color:#fff;white-space:nowrap;;-webkit-text-stroke:0.25px">HX500</div>
<div style="position:absolute;left:225.8px;top:1331.4px;width:106px;text-align:center;transform:rotate(90deg);transform-origin:0 0;font:normal 13px/13px 'Liberation Sans',sans-serif;color:#1a1a1a;white-space:nowrap;word-spacing:5px;">Engine Progra...</div>
<div style="position:absolute;left:242.5px;top:533px;width:559.5px;height:282px;background:#fff;"></div>
<div style="position:absolute;left:259px;top:548px;width:5px;height:14.5px;background:#ff8c1a;"></div>
<div style="position:absolute;left:270px;top:544.32px;font:bold 20px/20px 'Liberation Sans',sans-serif;color:#111;white-space:nowrap;">OnTime</div>
<div style="position:absolute;left:773px;top:548px;width:2px;height:2px;background:#b4b4b4;"></div>
<div style="position:absolute;left:778px;top:548px;width:12px;height:2px;background:#b4b4b4;"></div>
<div style="position:absolute;left:773px;top:553px;width:2px;height:2px;background:#b4b4b4;"></div>
<div style="position:absolute;left:778px;top:553px;width:12px;height:2px;background:#b4b4b4;"></div>
<div style="position:absolute;left:773px;top:558px;width:2px;height:2px;background:#b4b4b4;"></div>
<div style="position:absolute;left:778px;top:558px;width:12px;height:2px;background:#b4b4b4;"></div>
<svg style="position:absolute;left:374.25px;top:615.5px" width="163.0" height="163.0" viewBox="0 0 163.0 163.0"><path d="M81.5,81.5 L81.50,2.00 A79.5,79.5 0 0 1 93.69,2.94 Z" fill="#ff3300" stroke="#fff" stroke-width="1.2" stroke-linejoin="round"/><path d="M81.5,81.5 L93.69,2.94 A79.5,79.5 0 0 1 118.70,11.24 Z" fill="#fb7a10" stroke="#fff" stroke-width="1.2" stroke-linejoin="round"/><path d="M81.5,81.5 L118.70,11.24 A79.5,79.5 0 0 1 153.96,48.78 Z" fill="#f8e01c" stroke="#fff" stroke-width="1.2" stroke-linejoin="round"/><path d="M81.5,81.5 L153.96,48.78 A79.5,79.5 0 0 1 148.49,124.31 Z" fill="#c3ea1c" stroke="#fff" stroke-width="1.2" stroke-linejoin="round"/><path d="M81.5,81.5 L148.49,124.31 A79.5,79.5 0 0 1 69.31,160.06 Z" fill="#88e01c" stroke="#fff" stroke-width="1.2" stroke-linejoin="round"/><path d="M81.5,81.5 L69.31,160.06 A79.5,79.5 0 0 1 2.25,87.74 Z" fill="#40e01c" stroke="#fff" stroke-width="1.2" stroke-linejoin="round"/><path d="M81.5,81.5 L2.25,87.74 A79.5,79.5 0 0 1 81.50,2.00 Z" fill="#00e020" stroke="#fff" stroke-width="1.2" stroke-linejoin="round"/></svg>
<div style="position:absolute;left:353px;top:627.02px;font:bold 13.5px/13.5px 'Liberation Sans',sans-serif;color:#000;white-space:nowrap;">26.3%</div>
<div style="position:absolute;left:482.5px;top:604.52px;font:bold 13.5px/13.5px 'Liberation Sans',sans-serif;color:#000;white-space:nowrap;">5.3%</div>
<div style="position:absolute;left:517px;top:627.02px;font:bold 13.5px/13.5px 'Liberation Sans',sans-serif;color:#000;white-space:nowrap;">10.5%</div>
<div style="position:absolute;left:537.5px;top:695.77px;font:bold 13.5px/13.5px 'Liberation Sans',sans-serif;color:#000;white-space:nowrap;">15.8%</div>
<div style="position:absolute;left:490px;top:770.77px;font:bold 13.5px/13.5px 'Liberation Sans',sans-serif;color:#000;white-space:nowrap;">18.4%</div>
<div style="position:absolute;left:663.6px;top:583.37px;font:normal 13.5px/13.5px 'Liberation Sans',sans-serif;color:#222;white-space:nowrap;;-webkit-text-stroke:0.25px">Color by:</div>
<div style="position:absolute;left:671.4px;top:607.2px;font:normal 13px/13px 'Liberation Sans',sans-serif;color:#222;white-space:nowrap;;-webkit-text-stroke:0.25px;letter-spacing:0.1px">On Time</div>
<div style="position:absolute;left:660px;top:630px;width:119.60000000000002px;height:185px;overflow:hidden"><div style="position:absolute;left:-660px;top:-630px;width:1861px;height:1392px">
<div style="position:absolute;left:668.5px;top:635.7px;width:12px;height:12px;border-radius:50%;background:#00e020;border:1px solid #1cb02a"></div>
<div style="position:absolute;left:687.9px;top:635.85px;font:normal 14px/14px 'Liberation Sans',sans-serif;color:#1a1a1a;white-space:nowrap;;-webkit-text-stroke:0.25px">Equal to 10</div>
<div style="position:absolute;left:668.5px;top:655.85px;width:12px;height:12px;border-radius:50%;background:#40e01c;border:1px solid #3ab828"></div>
<div style="position:absolute;left:687.9px;top:656.0px;font:normal 14px/14px 'Liberation Sans',sans-serif;color:#1a1a1a;white-space:nowrap;;-webkit-text-stroke:0.25px">Equal to 8</div>
<div style="position:absolute;left:668.5px;top:676px;width:12px;height:12px;border-radius:50%;background:#88e01c;border:1px solid #70b828"></div>
<div style="position:absolute;left:687.9px;top:676.15px;font:normal 14px/14px 'Liberation Sans',sans-serif;color:#1a1a1a;white-space:nowrap;;-webkit-text-stroke:0.25px">Equal to 7</div>
<div style="position:absolute;left:668.5px;top:696.15px;width:12px;height:12px;border-radius:50%;background:#c3ea1c;border:1px solid #a0c030"></div>
<div style="position:absolute;left:687.9px;top:696.3px;font:normal 14px/14px 'Liberation Sans',sans-serif;color:#1a1a1a;white-space:nowrap;;-webkit-text-stroke:0.25px">Equal to 6</div>
<div style="position:absolute;left:668.5px;top:716.3px;width:12px;height:12px;border-radius:50%;background:#f8e01c;border:1px solid #d0b840"></div>
<div style="position:absolute;left:687.9px;top:716.45px;font:normal 14px/14px 'Liberation Sans',sans-serif;color:#1a1a1a;white-space:nowrap;;-webkit-text-stroke:0.25px">Equal to 4</div>
<div style="position:absolute;left:668.5px;top:736.45px;width:12px;height:12px;border-radius:50%;background:#fb7a10;border:1px solid #d06420"></div>
<div style="position:absolute;left:687.9px;top:736.6px;font:normal 14px/14px 'Liberation Sans',sans-serif;color:#1a1a1a;white-space:nowrap;;-webkit-text-stroke:0.25px">Equal to 2</div>
<div style="position:absolute;left:668.5px;top:761.4px;width:12px;height:12px;border-radius:50%;background:#ff3300;border:1px solid #d03010"></div>
<div style="position:absolute;left:687.9px;top:761.55px;font:normal 14px/14px 'Liberation Sans',sans-serif;color:#1a1a1a;white-space:nowrap;;-webkit-text-stroke:0.25px">Equal to 0</div>
<div style="position:absolute;left:668.5px;top:781.3px;width:12px;height:12px;border-radius:50%;background:#4682b4;border:1px solid #3a6a98"></div>
<div style="position:absolute;left:687.9px;top:781.45px;font:normal 14px/14px 'Liberation Sans',sans-serif;color:#1a1a1a;white-space:nowrap;;-webkit-text-stroke:0.25px">All other values</div>
</div></div>
<div style="position:absolute;left:779.6px;top:581.2px;width:16.5px;height:228.5px;background:#f4f4f4;box-sizing:border-box;border:1px solid #cfcfcf"></div>
<div style="position:absolute;left:780.6px;top:582.2px;width:14.5px;height:225.1px;background:#e6e6e6;"></div>
<div style="position:absolute;left:782.6px;top:582.2px;width:10.5px;height:225.1px;background:#f1f1f1;box-sizing:border-box;border:1px solid #ababab"></div>
<div style="position:absolute;left:805px;top:533px;width:587px;height:282px;background:#fff;"></div>
<div style="position:absolute;left:821.5px;top:548px;width:5px;height:14.5px;background:#ff8c1a;"></div>
<div style="position:absolute;left:832.5px;top:544.32px;font:bold 20px/20px 'Liberation Sans',sans-serif;color:#111;white-space:nowrap;letter-spacing:0.3px">Quality of the Event</div>
<div style="position:absolute;left:1362.5px;top:548px;width:2px;height:2px;background:#b4b4b4;"></div>
<div style="position:absolute;left:1367.5px;top:548px;width:12px;height:2px;background:#b4b4b4;"></div>
<div style="position:absolute;left:1362.5px;top:553px;width:2px;height:2px;background:#b4b4b4;"></div>
<div style="position:absolute;left:1367.5px;top:553px;width:12px;height:2px;background:#b4b4b4;"></div>
<div style="position:absolute;left:1362.5px;top:558px;width:2px;height:2px;background:#b4b4b4;"></div>
<div style="position:absolute;left:1367.5px;top:558px;width:12px;height:2px;background:#b4b4b4;"></div>
<svg style="position:absolute;left:951.0px;top:615.5px" width="163.0" height="163.0" viewBox="0 0 163.0 163.0"><path d="M81.5,81.5 L81.50,2.00 A79.5,79.5 0 0 1 91.46,2.63 Z" fill="#ff3300" stroke="#fff" stroke-width="1.2" stroke-linejoin="round"/><path d="M81.5,81.5 L91.46,2.63 A79.5,79.5 0 0 1 112.84,8.44 Z" fill="#fb7a10" stroke="#fff" stroke-width="1.2" stroke-linejoin="round"/><path d="M81.5,81.5 L112.84,8.44 A79.5,79.5 0 0 1 139.28,26.90 Z" fill="#f7a818" stroke="#fff" stroke-width="1.2" stroke-linejoin="round"/><path d="M81.5,81.5 L139.28,26.90 A79.5,79.5 0 0 1 159.25,64.89 Z" fill="#f8e01c" stroke="#fff" stroke-width="1.2" stroke-linejoin="round"/><path d="M81.5,81.5 L159.25,64.89 A79.5,79.5 0 0 1 152.22,117.81 Z" fill="#e8f81c" stroke="#fff" stroke-width="1.2" stroke-linejoin="round"/><path d="M81.5,81.5 L152.22,117.81 A79.5,79.5 0 0 1 103.44,157.91 Z" fill="#c3ea1c" stroke="#fff" stroke-width="1.2" stroke-linejoin="round"/><path d="M81.5,81.5 L103.44,157.91 A79.5,79.5 0 0 1 31.79,143.54 Z" fill="#88e01c" stroke="#fff" stroke-width="1.2" stroke-linejoin="round"/><path d="M81.5,81.5 L31.79,143.54 A79.5,79.5 0 0 1 3.55,65.87 Z" fill="#40e01c" stroke="#fff" stroke-width="1.2" stroke-linejoin="round"/><path d="M81.5,81.5 L3.55,65.87 A79.5,79.5 0 0 1 81.50,2.00 Z" fill="#00e020" stroke="#fff" stroke-width="1.2" stroke-linejoin="round"/></svg>
<div style="position:absolute;left:938px;top:618.27px;font:bold 13.5px/13.5px 'Liberation Sans',sans-serif;color:#000;white-space:nowrap;">21.7%</div>
<div style="position:absolute;left:1080px;top:615.77px;font:bold 13.5px/13.5px 'Liberation Sans',sans-serif;color:#000;white-space:nowrap;">6.5%</div>
<div style="position:absolute;left:1104.5px;top:653.27px;font:bold 13.5px/13.5px 'Liberation Sans',sans-serif;color:#000;white-space:nowrap;">8.7%</div>
<div style="position:absolute;left:1113.75px;top:701.27px;font:bold 13.5px/13.5px 'Liberation Sans',sans-serif;color:#000;white-space:nowrap;">10.9%</div>
<div style="position:absolute;left:913.75px;top:716.52px;font:bold 13.5px/13.5px 'Liberation Sans',sans-serif;color:#000;white-space:nowrap;">17.4%</div>
<div style="position:absolute;left:973px;top:776.27px;font:bold 13.5px/13.5px 'Liberation Sans',sans-serif;color:#000;white-space:nowrap;">15.2%</div>
<div style="position:absolute;left:1085.5px;top:760.77px;font:bold 13.5px/13.5px 'Liberation Sans',sans-serif;color:#000;white-space:nowrap;">13.0%</div>
<div style="position:absolute;left:1252.5px;top:583.37px;font:normal 13.5px/13.5px 'Liberation Sans',sans-serif;color:#222;white-space:nowrap;;-webkit-text-stroke:0.25px">Color by:</div>
<div style="position:absolute;left:1260.3px;top:607.2px;font:normal 13px/13px 'Liberation Sans',sans-serif;color:#222;white-space:nowrap;;-webkit-text-stroke:0.25px;letter-spacing:0.1px">QoE</div>
<div style="position:absolute;left:1245px;top:630px;width:123px;height:185px;overflow:hidden"><div style="position:absolute;left:-1245px;top:-630px;width:1861px;height:1392px">
<div style="position:absolute;left:1257.4px;top:635.7px;width:12px;height:12px;border-radius:50%;background:#00e020;border:1px solid #1cb02a"></div>
<div style="position:absolute;left:1277px;top:635.85px;font:normal 14px/14px 'Liberation Sans',sans-serif;color:#1a1a1a;white-space:nowrap;;-webkit-text-stroke:0.25px">Equal to 10</div>
<div style="position:absolute;left:1257.4px;top:655.85px;width:12px;height:12px;border-radius:50%;background:#40e01c;border:1px solid #3ab828"></div>
<div style="position:absolute;left:1277px;top:656.0px;font:normal 14px/14px 'Liberation Sans',sans-serif;color:#1a1a1a;white-space:nowrap;;-webkit-text-stroke:0.25px">Equal to 8</div>
<div style="position:absolute;left:1257.4px;top:676.0px;width:12px;height:12px;border-radius:50%;background:#88e01c;border:1px solid #70b828"></div>
<div style="position:absolute;left:1277px;top:676.15px;font:normal 14px/14px 'Liberation Sans',sans-serif;color:#1a1a1a;white-space:nowrap;;-webkit-text-stroke:0.25px">Equal to 7</div>
<div style="position:absolute;left:1257.4px;top:696.15px;width:12px;height:12px;border-radius:50%;background:#c3ea1c;border:1px solid #a0c030"></div>
<div style="position:absolute;left:1277px;top:696.3px;font:normal 14px/14px 'Liberation Sans',sans-serif;color:#1a1a1a;white-space:nowrap;;-webkit-text-stroke:0.25px">Equal to 6</div>
<div style="position:absolute;left:1257.4px;top:716.3px;width:12px;height:12px;border-radius:50%;background:#e8f81c;border:1px solid #c0c840"></div>
<div style="position:absolute;left:1277px;top:716.45px;font:normal 14px/14px 'Liberation Sans',sans-serif;color:#1a1a1a;white-space:nowrap;;-webkit-text-stroke:0.25px">Equal to 5</div>
<div style="position:absolute;left:1257.4px;top:736.45px;width:12px;height:12px;border-radius:50%;background:#f8e01c;border:1px solid #d0b840"></div>
<div style="position:absolute;left:1277px;top:736.6px;font:normal 14px/14px 'Liberation Sans',sans-serif;color:#1a1a1a;white-space:nowrap;;-webkit-text-stroke:0.25px">Equal to 4</div>
<div style="position:absolute;left:1257.4px;top:756.6px;width:12px;height:12px;border-radius:50%;background:#f7a818;border:1px solid #d08a30"></div>
<div style="position:absolute;left:1277px;top:756.75px;font:normal 14px/14px 'Liberation Sans',sans-serif;color:#1a1a1a;white-space:nowrap;;-webkit-text-stroke:0.25px">Equal to 3</div>
<div style="position:absolute;left:1257.4px;top:776.75px;width:12px;height:12px;border-radius:50%;background:#fb7a10;border:1px solid #d06420"></div>
<div style="position:absolute;left:1277px;top:776.9px;font:normal 14px/14px 'Liberation Sans',sans-serif;color:#1a1a1a;white-space:nowrap;;-webkit-text-stroke:0.25px">Equal to 2</div>
<div style="position:absolute;left:1257.4px;top:796.9px;width:12px;height:12px;border-radius:50%;background:#ff3300;border:1px solid #d03010"></div>
<div style="position:absolute;left:1277px;top:797.05px;font:normal 14px/14px 'Liberation Sans',sans-serif;color:#1a1a1a;white-space:nowrap;;-webkit-text-stroke:0.25px">Equal to 1</div>
</div></div>
<div style="position:absolute;left:1368.25px;top:581.25px;width:17.25px;height:228.75px;background:#f4f4f4;box-sizing:border-box;border:1px solid #cfcfcf"></div>
<div style="position:absolute;left:1369.25px;top:582.25px;width:15.25px;height:177.75px;background:#e6e6e6;"></div>
<div style="position:absolute;left:1371.25px;top:582.25px;width:11.25px;height:177.75px;background:#f1f1f1;box-sizing:border-box;border:1px solid #ababab"></div>
<div style="position:absolute;left:1395.5px;top:533px;width:350.5px;height:282px;background:#fff;"></div>
<div style="position:absolute;left:1410.5px;top:548px;width:5px;height:14.5px;background:#ff8c1a;"></div>
<div style="position:absolute;left:1421.75px;top:544.32px;font:bold 20px/20px 'Liberation Sans',sans-serif;color:#111;white-space:nowrap;letter-spacing:0.2px">Resources</div>
<div style="position:absolute;left:1534.5px;top:617.5px;width:158.5px;height:158.5px;border-radius:50%;background:#4fac2a"></div>
</div></div>
<div style="position:absolute;left:0px;top:734px;width:1861px;height:658px;overflow:hidden"><div style="position:absolute;left:0px;top:-734px;width:1861px;height:1392px">
<div style="position:absolute;left:100px;top:741px;width:1647px;height:610.5px;background:#efefef;"></div>
<div style="position:absolute;left:100px;top:741px;width:1647px;height:610.5px;overflow:hidden"><div style="position:absolute;left:-100px;top:-741px;width:1861px;height:1392px">
<div style="position:absolute;left:101px;top:508px;width:138px;height:892px;background:#fff;box-sizing:border-box;border:1px solid #d9d9d9;border-bottom:none"></div>
<div style="position:absolute;left:116.4px;top:523.4px;width:110.9px;height:876.6px;background:#fff;box-sizing:border-box;border:1px solid #d2d2d2;border-bottom:none"></div>
<div style="position:absolute;left:209.1px;top:524.4px;width:1.0px;height:875.6px;background:#dcdcdc;"></div>
<div style="position:absolute;left:210.1px;top:524.4px;width:16.2px;height:875.6px;background:#f7f7f7;"></div>
<div style="position:absolute;left:116.4px;top:634.9px;width:110.9px;height:1.0px;background:#d6d6d6;"></div>
<div style="position:absolute;left:119.7px;top:526.9px;width:86.7px;height:105.8px;background:#cce5fb;"></div>
<div style="position:absolute;left:-337.8px;width:1000px;text-align:center;top:563.2px;font:normal 14px/14px 'Liberation Sans',sans-serif;color:#222;white-space:nowrap;;-webkit-text-stroke:0.25px">Engine 900</div>
<div style="position:absolute;left:-337.8px;width:1000px;text-align:center;top:578.7px;font:normal 14px/14px 'Liberation Sans',sans-serif;color:#222;white-space:nowrap;;-webkit-text-stroke:0.25px">MN</div>
<div style="position:absolute;left:225.8px;top:524.9px;width:106px;text-align:center;transform:rotate(90deg);transform-origin:0 0;font:normal 13px/13px 'Liberation Sans',sans-serif;color:#1a1a1a;white-space:nowrap;">Engine 900 MN</div>
<div style="position:absolute;left:116.4px;top:746.6px;width:110.9px;height:1.0px;background:#d6d6d6;"></div>
<div style="position:absolute;left:119.7px;top:638.6px;width:86.7px;height:105.8px;background:#cce5fb;"></div>
<div style="position:absolute;left:-337.8px;width:1000px;text-align:center;top:667.15px;font:normal 14px/14px 'Liberation Sans',sans-serif;color:#222;white-space:nowrap;;-webkit-text-stroke:0.25px">Engine</div>
<div style="position:absolute;left:-337.8px;width:1000px;text-align:center;top:682.65px;font:normal 14px/14px 'Liberation Sans',sans-serif;color:#222;white-space:nowrap;;-webkit-text-stroke:0.25px">Model 330</div>
<div style="position:absolute;left:-337.8px;width:1000px;text-align:center;top:698.15px;font:normal 14px/14px 'Liberation Sans',sans-serif;color:#222;white-space:nowrap;;-webkit-text-stroke:0.25px">PWC</div>
<div style="position:absolute;left:225.8px;top:636.6px;width:106px;text-align:center;transform:rotate(90deg);transform-origin:0 0;font:normal 13px/13px 'Liberation Sans',sans-serif;color:#1a1a1a;white-space:nowrap;word-spacing:5px;">Engine Model...</div>
<div style="position:absolute;left:116.4px;top:858.3px;width:110.9px;height:1.0px;background:#d6d6d6;"></div>
<div style="position:absolute;left:119.7px;top:750.3px;width:86.7px;height:105.8px;background:#cce5fb;"></div>
<div style="position:absolute;left:-337.8px;width:1000px;text-align:center;top:778.85px;font:normal 14px/14px 'Liberation Sans',sans-serif;color:#222;white-space:nowrap;;-webkit-text-stroke:0.25px">Engine</div>
<div style="position:absolute;left:-337.8px;width:1000px;text-align:center;top:794.35px;font:normal 14px/14px 'Liberation Sans',sans-serif;color:#222;white-space:nowrap;;-webkit-text-stroke:0.25px">Model 7000</div>
<div style="position:absolute;left:-337.8px;width:1000px;text-align:center;top:809.85px;font:normal 14px/14px 'Liberation Sans',sans-serif;color:#222;white-space:nowrap;;-webkit-text-stroke:0.25px">ZXYi</div>
<div style="position:absolute;left:225.8px;top:748.3px;width:106px;text-align:center;transform:rotate(90deg);transform-origin:0 0;font:normal 13px/13px 'Liberation Sans',sans-serif;color:#1a1a1a;white-space:nowrap;word-spacing:5px;">Engine Model...</div>
<div style="position:absolute;left:116.4px;top:970.0px;width:110.9px;height:1.0px;background:#d6d6d6;"></div>
<div style="position:absolute;left:119.7px;top:862.0px;width:86.7px;height:105.8px;background:#cce5fb;"></div>
<div style="position:absolute;left:-337.8px;width:1000px;text-align:center;top:890.55px;font:normal 14px/14px 'Liberation Sans',sans-serif;color:#222;white-space:nowrap;;-webkit-text-stroke:0.25px">Engine</div>
<div style="position:absolute;left:-337.8px;width:1000px;text-align:center;top:906.05px;font:normal 14px/14px 'Liberation Sans',sans-serif;color:#222;white-space:nowrap;;-webkit-text-stroke:0.25px">Model 875</div>
<div style="position:absolute;left:-337.8px;width:1000px;text-align:center;top:921.55px;font:normal 14px/14px 'Liberation Sans',sans-serif;color:#222;white-space:nowrap;;-webkit-text-stroke:0.25px">XZ</div>
<div style="position:absolute;left:225.8px;top:860.0px;width:106px;text-align:center;transform:rotate(90deg);transform-origin:0 0;font:normal 13px/13px 'Liberation Sans',sans-serif;color:#1a1a1a;white-space:nowrap;word-spacing:5px;">Engine Model...</div>
<div style="position:absolute;left:116.4px;top:1081.7px;width:110.9px;height:1.0px;background:#d6d6d6;"></div>
<div style="position:absolute;left:119.7px;top:973.7px;width:86.7px;height:105.8px;background:#cce5fb;"></div>
<div style="position:absolute;left:-337.8px;width:1000px;text-align:center;top:1002.25px;font:normal 14px/14px 'Liberation Sans',sans-serif;color:#222;white-space:nowrap;;-webkit-text-stroke:0.25px">Engine</div>
<div style="position:absolute;left:-337.8px;width:1000px;text-align:center;top:1017.75px;font:normal 14px/14px 'Liberation Sans',sans-serif;color:#222;white-space:nowrap;;-webkit-text-stroke:0.25px">Model</div>
<div style="position:absolute;left:-337.8px;width:1000px;text-align:center;top:1033.25px;font:normal 14px/14px 'Liberation Sans',sans-serif;color:#222;white-space:nowrap;;-webkit-text-stroke:0.25px">SP100x</div>
<div style="position:absolute;left:225.8px;top:971.7px;width:106px;text-align:center;transform:rotate(90deg);transform-origin:0 0;font:normal 13px/13px 'Liberation Sans',sans-serif;color:#1a1a1a;white-space:nowrap;word-spacing:5px;">Engine Model...</div>
<div style="position:absolute;left:116.4px;top:1193.4px;width:110.9px;height:1.0px;background:#d6d6d6;"></div>
<div style="position:absolute;left:119.7px;top:1085.4px;width:86.7px;height:105.8px;background:#cce5fb;"></div>
<div style="position:absolute;left:-337.8px;width:1000px;text-align:center;top:1106.2px;font:normal 14px/14px 'Liberation Sans',sans-serif;color:#222;white-space:nowrap;;-webkit-text-stroke:0.25px">Engine</div>
<div style="position:absolute;left:-337.8px;width:1000px;text-align:center;top:1121.7px;font:normal 14px/14px 'Liberation Sans',sans-serif;color:#222;white-space:nowrap;;-webkit-text-stroke:0.25px">Program</div>
<div style="position:absolute;left:-337.8px;width:1000px;text-align:center;top:1137.2px;font:normal 14px/14px 'Liberation Sans',sans-serif;color:#222;white-space:nowrap;;-webkit-text-stroke:0.25px">Delta Hawk</div>
<div style="position:absolute;left:-337.8px;width:1000px;text-align:center;top:1152.7px;font:normal 14px/14px 'Liberation Sans',sans-serif;color:#222;white-space:nowrap;;-webkit-text-stroke:0.25px">BMX1000</div>
<div style="position:absolute;left:225.8px;top:1083.4px;width:106px;text-align:center;transform:rotate(90deg);transform-origin:0 0;font:normal 13px/13px 'Liberation Sans',sans-serif;color:#1a1a1a;white-space:nowrap;word-spacing:5px;">Engine Progra...</div>
<div style="position:absolute;left:116.4px;top:1305.1px;width:110.9px;height:1.0px;background:#d6d6d6;"></div>
<div style="position:absolute;left:119.7px;top:1197.1px;width:86.7px;height:105.8px;background:#cce5fb;"></div>
<div style="position:absolute;left:-337.8px;width:1000px;text-align:center;top:1225.65px;font:normal 14px/14px 'Liberation Sans',sans-serif;color:#222;white-space:nowrap;;-webkit-text-stroke:0.25px">Engine</div>
<div style="position:absolute;left:-337.8px;width:1000px;text-align:center;top:1241.15px;font:normal 14px/14px 'Liberation Sans',sans-serif;color:#222;white-space:nowrap;;-webkit-text-stroke:0.25px">Program</div>
<div style="position:absolute;left:-337.8px;width:1000px;text-align:center;top:1256.65px;font:normal 14px/14px 'Liberation Sans',sans-serif;color:#222;white-space:nowrap;;-webkit-text-stroke:0.25px">Eagle X900</div>
<div style="position:absolute;left:225.8px;top:1195.1px;width:106px;text-align:center;transform:rotate(90deg);transform-origin:0 0;font:normal 13px/13px 'Liberation Sans',sans-serif;color:#1a1a1a;white-space:nowrap;word-spacing:5px;">Engine Progra...</div>
<div style="position:absolute;left:116.4px;top:1416.8px;width:110.9px;height:1.0px;background:#d6d6d6;"></div>
<div style="position:absolute;left:119.7px;top:1308.8px;width:86.7px;height:105.8px;background:#0a7cf5;box-sizing:border-box;border:1px solid #1d3f7a"></div>
<div style="position:absolute;left:-337.8px;width:1000px;text-align:center;top:1329.6px;font:normal 14px/14px 'Liberation Sans',sans-serif;color:#fff;white-space:nowrap;;-webkit-text-stroke:0.25px">Engine</div>
<div style="position:absolute;left:-337.8px;width:1000px;text-align:center;top:1345.1px;font:normal 14px/14px 'Liberation Sans',sans-serif;color:#fff;white-space:nowrap;;-webkit-text-stroke:0.25px">Program</div>
<div style="position:absolute;left:-337.8px;width:1000px;text-align:center;top:1360.6px;font:normal 14px/14px 'Liberation Sans',sans-serif;color:#fff;white-space:nowrap;;-webkit-text-stroke:0.25px">Heroic</div>
<div style="position:absolute;left:-337.8px;width:1000px;text-align:center;top:1376.1px;font:normal 14px/14px 'Liberation Sans',sans-serif;color:#fff;white-space:nowrap;;-webkit-text-stroke:0.25px">HX500</div>
<div style="position:absolute;left:225.8px;top:1306.8px;width:106px;text-align:center;transform:rotate(90deg);transform-origin:0 0;font:normal 13px/13px 'Liberation Sans',sans-serif;color:#1a1a1a;white-space:nowrap;word-spacing:5px;">Engine Progra...</div>
<div style="position:absolute;left:242.5px;top:508px;width:559.5px;height:282px;background:#fff;"></div>
<div style="position:absolute;left:259px;top:523px;width:5px;height:14.5px;background:#ff8c1a;"></div>
<div style="position:absolute;left:270px;top:519.32px;font:bold 20px/20px 'Liberation Sans',sans-serif;color:#111;white-space:nowrap;">OnTime</div>
<div style="position:absolute;left:773px;top:523px;width:2px;height:2px;background:#b4b4b4;"></div>
<div style="position:absolute;left:778px;top:523px;width:12px;height:2px;background:#b4b4b4;"></div>
<div style="position:absolute;left:773px;top:528px;width:2px;height:2px;background:#b4b4b4;"></div>
<div style="position:absolute;left:778px;top:528px;width:12px;height:2px;background:#b4b4b4;"></div>
<div style="position:absolute;left:773px;top:533px;width:2px;height:2px;background:#b4b4b4;"></div>
<div style="position:absolute;left:778px;top:533px;width:12px;height:2px;background:#b4b4b4;"></div>
<svg style="position:absolute;left:374.25px;top:590.5px" width="163.0" height="163.0" viewBox="0 0 163.0 163.0"><path d="M81.5,81.5 L81.50,2.00 A79.5,79.5 0 0 1 93.69,2.94 Z" fill="#ff3300" stroke="#fff" stroke-width="1.2" stroke-linejoin="round"/><path d="M81.5,81.5 L93.69,2.94 A79.5,79.5 0 0 1 118.70,11.24 Z" fill="#fb7a10" stroke="#fff" stroke-width="1.2" stroke-linejoin="round"/><path d="M81.5,81.5 L118.70,11.24 A79.5,79.5 0 0 1 153.96,48.78 Z" fill="#f8e01c" stroke="#fff" stroke-width="1.2" stroke-linejoin="round"/><path d="M81.5,81.5 L153.96,48.78 A79.5,79.5 0 0 1 148.49,124.31 Z" fill="#c3ea1c" stroke="#fff" stroke-width="1.2" stroke-linejoin="round"/><path d="M81.5,81.5 L148.49,124.31 A79.5,79.5 0 0 1 69.31,160.06 Z" fill="#88e01c" stroke="#fff" stroke-width="1.2" stroke-linejoin="round"/><path d="M81.5,81.5 L69.31,160.06 A79.5,79.5 0 0 1 2.25,87.74 Z" fill="#40e01c" stroke="#fff" stroke-width="1.2" stroke-linejoin="round"/><path d="M81.5,81.5 L2.25,87.74 A79.5,79.5 0 0 1 81.50,2.00 Z" fill="#00e020" stroke="#fff" stroke-width="1.2" stroke-linejoin="round"/></svg>
<div style="position:absolute;left:353px;top:602.02px;font:bold 13.5px/13.5px 'Liberation Sans',sans-serif;color:#000;white-space:nowrap;">26.3%</div>
<div style="position:absolute;left:482.5px;top:579.52px;font:bold 13.5px/13.5px 'Liberation Sans',sans-serif;color:#000;white-space:nowrap;">5.3%</div>
<div style="position:absolute;left:517px;top:602.02px;font:bold 13.5px/13.5px 'Liberation Sans',sans-serif;color:#000;white-space:nowrap;">10.5%</div>
<div style="position:absolute;left:537.5px;top:670.77px;font:bold 13.5px/13.5px 'Liberation Sans',sans-serif;color:#000;white-space:nowrap;">15.8%</div>
<div style="position:absolute;left:490px;top:745.77px;font:bold 13.5px/13.5px 'Liberation Sans',sans-serif;color:#000;white-space:nowrap;">18.4%</div>
<div style="position:absolute;left:663.6px;top:558.37px;font:normal 13.5px/13.5px 'Liberation Sans',sans-serif;color:#222;white-space:nowrap;;-webkit-text-stroke:0.25px">Color by:</div>
<div style="position:absolute;left:671.4px;top:582.2px;font:normal 13px/13px 'Liberation Sans',sans-serif;color:#222;white-space:nowrap;;-webkit-text-stroke:0.25px;letter-spacing:0.1px">On Time</div>
<div style="position:absolute;left:660px;top:605px;width:119.60000000000002px;height:185px;overflow:hidden"><div style="position:absolute;left:-660px;top:-605px;width:1861px;height:1392px">
<div style="position:absolute;left:668.5px;top:610.7px;width:12px;height:12px;border-radius:50%;background:#00e020;border:1px solid #1cb02a"></div>
<div style="position:absolute;left:687.9px;top:610.85px;font:normal 14px/14px 'Liberation Sans',sans-serif;color:#1a1a1a;white-space:nowrap;;-webkit-text-stroke:0.25px">Equal to 10</div>
<div style="position:absolute;left:668.5px;top:630.85px;width:12px;height:12px;border-radius:50%;background:#40e01c;border:1px solid #3ab828"></div>
<div style="position:absolute;left:687.9px;top:631.0px;font:normal 14px/14px 'Liberation Sans',sans-serif;color:#1a1a1a;white-space:nowrap;;-webkit-text-stroke:0.25px">Equal to 8</div>
<div style="position:absolute;left:668.5px;top:651px;width:12px;height:12px;border-radius:50%;background:#88e01c;border:1px solid #70b828"></div>
<div style="position:absolute;left:687.9px;top:651.15px;font:normal 14px/14px 'Liberation Sans',sans-serif;color:#1a1a1a;white-space:nowrap;;-webkit-text-stroke:0.25px">Equal to 7</div>
<div style="position:absolute;left:668.5px;top:671.15px;width:12px;height:12px;border-radius:50%;background:#c3ea1c;border:1px solid #a0c030"></div>
<div style="position:absolute;left:687.9px;top:671.3px;font:normal 14px/14px 'Liberation Sans',sans-serif;color:#1a1a1a;white-space:nowrap;;-webkit-text-stroke:0.25px">Equal to 6</div>
<div style="position:absolute;left:668.5px;top:691.3px;width:12px;height:12px;border-radius:50%;background:#f8e01c;border:1px solid #d0b840"></div>
<div style="position:absolute;left:687.9px;top:691.45px;font:normal 14px/14px 'Liberation Sans',sans-serif;color:#1a1a1a;white-space:nowrap;;-webkit-text-stroke:0.25px">Equal to 4</div>
<div style="position:absolute;left:668.5px;top:711.45px;width:12px;height:12px;border-radius:50%;background:#fb7a10;border:1px solid #d06420"></div>
<div style="position:absolute;left:687.9px;top:711.6px;font:normal 14px/14px 'Liberation Sans',sans-serif;color:#1a1a1a;white-space:nowrap;;-webkit-text-stroke:0.25px">Equal to 2</div>
<div style="position:absolute;left:668.5px;top:736.4px;width:12px;height:12px;border-radius:50%;background:#ff3300;border:1px solid #d03010"></div>
<div style="position:absolute;left:687.9px;top:736.55px;font:normal 14px/14px 'Liberation Sans',sans-serif;color:#1a1a1a;white-space:nowrap;;-webkit-text-stroke:0.25px">Equal to 0</div>
<div style="position:absolute;left:668.5px;top:756.3px;width:12px;height:12px;border-radius:50%;background:#4682b4;border:1px solid #3a6a98"></div>
<div style="position:absolute;left:687.9px;top:756.45px;font:normal 14px/14px 'Liberation Sans',sans-serif;color:#1a1a1a;white-space:nowrap;;-webkit-text-stroke:0.25px">All other values</div>
</div></div>
<div style="position:absolute;left:779.6px;top:556.2px;width:16.5px;height:228.5px;background:#f4f4f4;box-sizing:border-box;border:1px solid #cfcfcf"></div>
<div style="position:absolute;left:780.6px;top:557.2px;width:14.5px;height:225.1px;background:#e6e6e6;"></div>
<div style="position:absolute;left:782.6px;top:557.2px;width:10.5px;height:225.1px;background:#f1f1f1;box-sizing:border-box;border:1px solid #ababab"></div>
<div style="position:absolute;left:805px;top:508px;width:587px;height:282px;background:#fff;"></div>
<div style="position:absolute;left:821.5px;top:523px;width:5px;height:14.5px;background:#ff8c1a;"></div>
<div style="position:absolute;left:832.5px;top:519.32px;font:bold 20px/20px 'Liberation Sans',sans-serif;color:#111;white-space:nowrap;letter-spacing:0.3px">Quality of the Event</div>
<div style="position:absolute;left:1362.5px;top:523px;width:2px;height:2px;background:#b4b4b4;"></div>
<div style="position:absolute;left:1367.5px;top:523px;width:12px;height:2px;background:#b4b4b4;"></div>
<div style="position:absolute;left:1362.5px;top:528px;width:2px;height:2px;background:#b4b4b4;"></div>
<div style="position:absolute;left:1367.5px;top:528px;width:12px;height:2px;background:#b4b4b4;"></div>
<div style="position:absolute;left:1362.5px;top:533px;width:2px;height:2px;background:#b4b4b4;"></div>
<div style="position:absolute;left:1367.5px;top:533px;width:12px;height:2px;background:#b4b4b4;"></div>
<svg style="position:absolute;left:951.0px;top:590.5px" width="163.0" height="163.0" viewBox="0 0 163.0 163.0"><path d="M81.5,81.5 L81.50,2.00 A79.5,79.5 0 0 1 91.46,2.63 Z" fill="#ff3300" stroke="#fff" stroke-width="1.2" stroke-linejoin="round"/><path d="M81.5,81.5 L91.46,2.63 A79.5,79.5 0 0 1 112.84,8.44 Z" fill="#fb7a10" stroke="#fff" stroke-width="1.2" stroke-linejoin="round"/><path d="M81.5,81.5 L112.84,8.44 A79.5,79.5 0 0 1 139.28,26.90 Z" fill="#f7a818" stroke="#fff" stroke-width="1.2" stroke-linejoin="round"/><path d="M81.5,81.5 L139.28,26.90 A79.5,79.5 0 0 1 159.25,64.89 Z" fill="#f8e01c" stroke="#fff" stroke-width="1.2" stroke-linejoin="round"/><path d="M81.5,81.5 L159.25,64.89 A79.5,79.5 0 0 1 152.22,117.81 Z" fill="#e8f81c" stroke="#fff" stroke-width="1.2" stroke-linejoin="round"/><path d="M81.5,81.5 L152.22,117.81 A79.5,79.5 0 0 1 103.44,157.91 Z" fill="#c3ea1c" stroke="#fff" stroke-width="1.2" stroke-linejoin="round"/><path d="M81.5,81.5 L103.44,157.91 A79.5,79.5 0 0 1 31.79,143.54 Z" fill="#88e01c" stroke="#fff" stroke-width="1.2" stroke-linejoin="round"/><path d="M81.5,81.5 L31.79,143.54 A79.5,79.5 0 0 1 3.55,65.87 Z" fill="#40e01c" stroke="#fff" stroke-width="1.2" stroke-linejoin="round"/><path d="M81.5,81.5 L3.55,65.87 A79.5,79.5 0 0 1 81.50,2.00 Z" fill="#00e020" stroke="#fff" stroke-width="1.2" stroke-linejoin="round"/></svg>
<div style="position:absolute;left:938px;top:593.27px;font:bold 13.5px/13.5px 'Liberation Sans',sans-serif;color:#000;white-space:nowrap;">21.7%</div>
<div style="position:absolute;left:1080px;top:590.77px;font:bold 13.5px/13.5px 'Liberation Sans',sans-serif;color:#000;white-space:nowrap;">6.5%</div>
<div style="position:absolute;left:1104.5px;top:628.27px;font:bold 13.5px/13.5px 'Liberation Sans',sans-serif;color:#000;white-space:nowrap;">8.7%</div>
<div style="position:absolute;left:1113.75px;top:676.27px;font:bold 13.5px/13.5px 'Liberation Sans',sans-serif;color:#000;white-space:nowrap;">10.9%</div>
<div style="position:absolute;left:913.75px;top:691.52px;font:bold 13.5px/13.5px 'Liberation Sans',sans-serif;color:#000;white-space:nowrap;">17.4%</div>
<div style="position:absolute;left:973px;top:751.27px;font:bold 13.5px/13.5px 'Liberation Sans',sans-serif;color:#000;white-space:nowrap;">15.2%</div>
<div style="position:absolute;left:1085.5px;top:735.77px;font:bold 13.5px/13.5px 'Liberation Sans',sans-serif;color:#000;white-space:nowrap;">13.0%</div>
<div style="position:absolute;left:1252.5px;top:558.37px;font:normal 13.5px/13.5px 'Liberation Sans',sans-serif;color:#222;white-space:nowrap;;-webkit-text-stroke:0.25px">Color by:</div>
<div style="position:absolute;left:1260.3px;top:582.2px;font:normal 13px/13px 'Liberation Sans',sans-serif;color:#222;white-space:nowrap;;-webkit-text-stroke:0.25px;letter-spacing:0.1px">QoE</div>
<div style="position:absolute;left:1245px;top:605px;width:123px;height:185px;overflow:hidden"><div style="position:absolute;left:-1245px;top:-605px;width:1861px;height:1392px">
<div style="position:absolute;left:1257.4px;top:610.7px;width:12px;height:12px;border-radius:50%;background:#00e020;border:1px solid #1cb02a"></div>
<div style="position:absolute;left:1277px;top:610.85px;font:normal 14px/14px 'Liberation Sans',sans-serif;color:#1a1a1a;white-space:nowrap;;-webkit-text-stroke:0.25px">Equal to 10</div>
<div style="position:absolute;left:1257.4px;top:630.85px;width:12px;height:12px;border-radius:50%;background:#40e01c;border:1px solid #3ab828"></div>
<div style="position:absolute;left:1277px;top:631.0px;font:normal 14px/14px 'Liberation Sans',sans-serif;color:#1a1a1a;white-space:nowrap;;-webkit-text-stroke:0.25px">Equal to 8</div>
<div style="position:absolute;left:1257.4px;top:651.0px;width:12px;height:12px;border-radius:50%;background:#88e01c;border:1px solid #70b828"></div>
<div style="position:absolute;left:1277px;top:651.15px;font:normal 14px/14px 'Liberation Sans',sans-serif;color:#1a1a1a;white-space:nowrap;;-webkit-text-stroke:0.25px">Equal to 7</div>
<div style="position:absolute;left:1257.4px;top:671.15px;width:12px;height:12px;border-radius:50%;background:#c3ea1c;border:1px solid #a0c030"></div>
<div style="position:absolute;left:1277px;top:671.3px;font:normal 14px/14px 'Liberation Sans',sans-serif;color:#1a1a1a;white-space:nowrap;;-webkit-text-stroke:0.25px">Equal to 6</div>
<div style="position:absolute;left:1257.4px;top:691.3px;width:12px;height:12px;border-radius:50%;background:#e8f81c;border:1px solid #c0c840"></div>
<div style="position:absolute;left:1277px;top:691.45px;font:normal 14px/14px 'Liberation Sans',sans-serif;color:#1a1a1a;white-space:nowrap;;-webkit-text-stroke:0.25px">Equal to 5</div>
<div style="position:absolute;left:1257.4px;top:711.45px;width:12px;height:12px;border-radius:50%;background:#f8e01c;border:1px solid #d0b840"></div>
<div style="position:absolute;left:1277px;top:711.6px;font:normal 14px/14px 'Liberation Sans',sans-serif;color:#1a1a1a;white-space:nowrap;;-webkit-text-stroke:0.25px">Equal to 4</div>
<div style="position:absolute;left:1257.4px;top:731.6px;width:12px;height:12px;border-radius:50%;background:#f7a818;border:1px solid #d08a30"></div>
<div style="position:absolute;left:1277px;top:731.75px;font:normal 14px/14px 'Liberation Sans',sans-serif;color:#1a1a1a;white-space:nowrap;;-webkit-text-stroke:0.25px">Equal to 3</div>
<div style="position:absolute;left:1257.4px;top:751.75px;width:12px;height:12px;border-radius:50%;background:#fb7a10;border:1px solid #d06420"></div>
<div style="position:absolute;left:1277px;top:751.9px;font:normal 14px/14px 'Liberation Sans',sans-serif;color:#1a1a1a;white-space:nowrap;;-webkit-text-stroke:0.25px">Equal to 2</div>
<div style="position:absolute;left:1257.4px;top:771.9px;width:12px;height:12px;border-radius:50%;background:#ff3300;border:1px solid #d03010"></div>
<div style="position:absolute;left:1277px;top:772.05px;font:normal 14px/14px 'Liberation Sans',sans-serif;color:#1a1a1a;white-space:nowrap;;-webkit-text-stroke:0.25px">Equal to 1</div>
</div></div>
<div style="position:absolute;left:1368.25px;top:556.25px;width:17.25px;height:228.75px;background:#f4f4f4;box-sizing:border-box;border:1px solid #cfcfcf"></div>
<div style="position:absolute;left:1369.25px;top:557.25px;width:15.25px;height:177.75px;background:#e6e6e6;"></div>
<div style="position:absolute;left:1371.25px;top:557.25px;width:11.25px;height:177.75px;background:#f1f1f1;box-sizing:border-box;border:1px solid #ababab"></div>
<div style="position:absolute;left:1395.5px;top:508px;width:350.5px;height:282px;background:#fff;"></div>
<div style="position:absolute;left:1410.5px;top:523px;width:5px;height:14.5px;background:#ff8c1a;"></div>
<div style="position:absolute;left:1421.75px;top:519.32px;font:bold 20px/20px 'Liberation Sans',sans-serif;color:#111;white-space:nowrap;letter-spacing:0.2px">Resources</div>
<div style="position:absolute;left:1534.5px;top:592.5px;width:158.5px;height:158.5px;border-radius:50%;background:#4fac2a"></div>
<div style="position:absolute;left:242.5px;top:794px;width:803.5px;height:273.5px;background:#fff;"></div>
<div style="position:absolute;left:259px;top:809px;width:5px;height:14.5px;background:#ff8c1a;"></div>
<div style="position:absolute;left:270.5px;top:806.07px;font:bold 20px/20px 'Liberation Sans',sans-serif;color:#111;white-space:nowrap;">Suppliers</div>
<div style="position:absolute;left:1016.5px;top:809px;width:2px;height:2px;background:#b4b4b4;"></div>
<div style="position:absolute;left:1021.5px;top:809px;width:12px;height:2px;background:#b4b4b4;"></div>
<div style="position:absolute;left:1016.5px;top:814px;width:2px;height:2px;background:#b4b4b4;"></div>
<div style="position:absolute;left:1021.5px;top:814px;width:12px;height:2px;background:#b4b4b4;"></div>
<div style="position:absolute;left:1016.5px;top:819px;width:2px;height:2px;background:#b4b4b4;"></div>
<div style="position:absolute;left:1021.5px;top:819px;width:12px;height:2px;background:#b4b4b4;"></div>
<div style="position:absolute;left:268.3px;top:855.65px;font:bold 14px/14px 'Liberation Sans',sans-serif;color:#111;white-space:nowrap;">Project</div>
<div style="position:absolute;left:394.5px;top:855.65px;font:bold 14px/14px 'Liberation Sans',sans-serif;color:#111;white-space:nowrap;">Supplier</div>
<div style="position:absolute;left:520.5px;top:855.65px;font:bold 14px/14px 'Liberation Sans',sans-serif;color:#111;white-space:nowrap;">Supplier Code</div>
<div style="position:absolute;left:645px;top:855.65px;font:bold 14px/14px 'Liberation Sans',sans-serif;color:#111;white-space:nowrap;">Part No</div>
<div style="position:absolute;left:770.75px;top:855.65px;font:bold 14px/14px 'Liberation Sans',sans-serif;color:#111;white-space:nowrap;">Part Family</div>
<div style="position:absolute;left:1021.75px;top:855.65px;font:bold 14px/14px 'Liberation Sans',sans-serif;color:#111;white-space:nowrap;">P</div>
<div style="position:absolute;left:0.5px;width:1000px;text-align:right;top:855.65px;font:bold 14px/14px 'Liberation Sans',sans-serif;color:#111;white-space:nowrap;">BOMLevel</div>
<div style="position:absolute;left:383px;top:852.5px;width:1px;height:18.5px;background:#e6e6e6;"></div>
<div style="position:absolute;left:508.75px;top:852.5px;width:1.0px;height:18.5px;background:#e6e6e6;"></div>
<div style="position:absolute;left:634.5px;top:852.5px;width:1.0px;height:18.5px;background:#e6e6e6;"></div>
<div style="position:absolute;left:759.5px;top:852.5px;width:1.0px;height:18.5px;background:#e6e6e6;"></div>
<div style="position:absolute;left:885.5px;top:852.5px;width:1.0px;height:18.5px;background:#e6e6e6;"></div>
<div style="position:absolute;left:1010.75px;top:852.5px;width:1.0px;height:18.5px;background:#e6e6e6;"></div>
<div style="position:absolute;left:257.8px;top:873.3px;width:771.5px;height:179.7px;overflow:hidden;background:#d4e9d4"><div style="position:absolute;left:-257.8px;top:-873.3px;width:1861px;height:1392px">
<div style="position:absolute;left:257.8px;top:873.3px;width:771.5px;height:19.8px;background:#006400;"></div>
<div style="position:absolute;left:268.3px;top:877.4px;font:normal 13px/13px 'Liberation Sans',sans-serif;color:#fff;white-space:nowrap;;-webkit-text-stroke:0.25px;letter-spacing:0.1px">Engine Progra<span style="letter-spacing:1.4px">...</span></div>
<div style="position:absolute;left:393.3px;top:877.4px;font:normal 13px/13px 'Liberation Sans',sans-serif;color:#fff;white-space:nowrap;;-webkit-text-stroke:0.25px;letter-spacing:0.1px">InHouse</div>
<div style="position:absolute;left:518.9px;top:877.4px;font:normal 13px/13px 'Liberation Sans',sans-serif;color:#fff;white-space:nowrap;;-webkit-text-stroke:0.25px;letter-spacing:0.1px">InHouse</div>
<div style="position:absolute;left:645.3px;top:877.4px;font:normal 13px/13px 'Liberation Sans',sans-serif;color:#fff;white-space:nowrap;;-webkit-text-stroke:0.25px;letter-spacing:0.1px">1501098</div>
<div style="position:absolute;left:770.3px;top:877.4px;font:normal 13px/13px 'Liberation Sans',sans-serif;color:#fff;white-space:nowrap;;-webkit-text-stroke:0.25px;letter-spacing:0.1px">Engine</div>
<div style="position:absolute;left:1.3px;width:1000px;text-align:right;top:877.4px;font:normal 13px/13px 'Liberation Sans',sans-serif;color:#fff;white-space:nowrap;;-webkit-text-stroke:0.25px;letter-spacing:0.1px">0</div>
<div style="position:absolute;left:257.8px;top:894.66px;width:771.5px;height:19.8px;background:#006400;"></div>
<div style="position:absolute;left:268.3px;top:898.76px;font:normal 13px/13px 'Liberation Sans',sans-serif;color:#fff;white-space:nowrap;;-webkit-text-stroke:0.25px;letter-spacing:0.1px">Engine Progra<span style="letter-spacing:1.4px">...</span></div>
<div style="position:absolute;left:393.3px;top:898.76px;font:normal 13px/13px 'Liberation Sans',sans-serif;color:#fff;white-space:nowrap;;-webkit-text-stroke:0.25px;letter-spacing:0.1px">Magna Intier</div>
<div style="position:absolute;left:518.9px;top:898.76px;font:normal 13px/13px 'Liberation Sans',sans-serif;color:#fff;white-space:nowrap;;-webkit-text-stroke:0.25px;letter-spacing:0.1px">SPC001</div>
<div style="position:absolute;left:645.3px;top:898.76px;font:normal 13px/13px 'Liberation Sans',sans-serif;color:#fff;white-space:nowrap;;-webkit-text-stroke:0.25px;letter-spacing:0.1px">1509679</div>
<div style="position:absolute;left:770.3px;top:898.76px;font:normal 13px/13px 'Liberation Sans',sans-serif;color:#fff;white-space:nowrap;;-webkit-text-stroke:0.25px;letter-spacing:0.1px">Valve</div>
<div style="position:absolute;left:1.3px;width:1000px;text-align:right;top:898.76px;font:normal 13px/13px 'Liberation Sans',sans-serif;color:#fff;white-space:nowrap;;-webkit-text-stroke:0.25px;letter-spacing:0.1px">1</div>
<div style="position:absolute;left:257.8px;top:916.02px;width:771.5px;height:19.8px;background:#006400;"></div>
<div style="position:absolute;left:268.3px;top:920.12px;font:normal 13px/13px 'Liberation Sans',sans-serif;color:#fff;white-space:nowrap;;-webkit-text-stroke:0.25px;letter-spacing:0.1px">Engine Progra<span style="letter-spacing:1.4px">...</span></div>
<div style="position:absolute;left:393.3px;top:920.12px;font:normal 13px/13px 'Liberation Sans',sans-serif;color:#fff;white-space:nowrap;;-webkit-text-stroke:0.25px;letter-spacing:0.1px">Magna Intier</div>
<div style="position:absolute;left:518.9px;top:920.12px;font:normal 13px/13px 'Liberation Sans',sans-serif;color:#fff;white-space:nowrap;;-webkit-text-stroke:0.25px;letter-spacing:0.1px">SPC001</div>
<div style="position:absolute;left:645.3px;top:920.12px;font:normal 13px/13px 'Liberation Sans',sans-serif;color:#fff;white-space:nowrap;;-webkit-text-stroke:0.25px;letter-spacing:0.1px">1501098</div>
<div style="position:absolute;left:770.3px;top:920.12px;font:normal 13px/13px 'Liberation Sans',sans-serif;color:#fff;white-space:nowrap;;-webkit-text-stroke:0.25px;letter-spacing:0.1px">Engine</div>
<div style="position:absolute;left:1.3px;width:1000px;text-align:right;top:920.12px;font:normal 13px/13px 'Liberation Sans',sans-serif;color:#fff;white-space:nowrap;;-webkit-text-stroke:0.25px;letter-spacing:0.1px">0</div>
<div style="position:absolute;left:257.8px;top:937.38px;width:771.5px;height:19.8px;background:#006400;"></div>
<div style="position:absolute;left:268.3px;top:941.48px;font:normal 13px/13px 'Liberation Sans',sans-serif;color:#fff;white-space:nowrap;;-webkit-text-stroke:0.25px;letter-spacing:0.1px">Engine Progra<span style="letter-spacing:1.4px">...</span></div>
<div style="position:absolute;left:393.3px;top:941.48px;font:normal 13px/13px 'Liberation Sans',sans-serif;color:#fff;white-space:nowrap;;-webkit-text-stroke:0.25px;letter-spacing:0.1px">ADL Insulflex</div>
<div style="position:absolute;left:518.9px;top:941.48px;font:normal 13px/13px 'Liberation Sans',sans-serif;color:#fff;white-space:nowrap;;-webkit-text-stroke:0.25px;letter-spacing:0.1px">SPC041</div>
<div style="position:absolute;left:645.3px;top:941.48px;font:normal 13px/13px 'Liberation Sans',sans-serif;color:#fff;white-space:nowrap;;-webkit-text-stroke:0.25px;letter-spacing:0.1px">1308908</div>
<div style="position:absolute;left:770.3px;top:941.48px;font:normal 13px/13px 'Liberation Sans',sans-serif;color:#fff;white-space:nowrap;;-webkit-text-stroke:0.25px;letter-spacing:0.1px">Shaft</div>
<div style="position:absolute;left:1.3px;width:1000px;text-align:right;top:941.48px;font:normal 13px/13px 'Liberation Sans',sans-serif;color:#fff;white-space:nowrap;;-webkit-text-stroke:0.25px;letter-spacing:0.1px">2</div>
<div style="position:absolute;left:257.8px;top:958.74px;width:771.5px;height:19.8px;background:#006400;"></div>
<div style="position:absolute;left:268.3px;top:962.84px;font:normal 13px/13px 'Liberation Sans',sans-serif;color:#fff;white-space:nowrap;;-webkit-text-stroke:0.25px;letter-spacing:0.1px">Engine Progra<span style="letter-spacing:1.4px">...</span></div>
<div style="position:absolute;left:393.3px;top:962.84px;font:normal 13px/13px 'Liberation Sans',sans-serif;color:#fff;white-space:nowrap;;-webkit-text-stroke:0.25px;letter-spacing:0.1px">Adrian Steel</div>
<div style="position:absolute;left:518.9px;top:962.84px;font:normal 13px/13px 'Liberation Sans',sans-serif;color:#fff;white-space:nowrap;;-webkit-text-stroke:0.25px;letter-spacing:0.1px">SPC042</div>
<div style="position:absolute;left:645.3px;top:962.84px;font:normal 13px/13px 'Liberation Sans',sans-serif;color:#fff;white-space:nowrap;;-webkit-text-stroke:0.25px;letter-spacing:0.1px">1304569</div>
<div style="position:absolute;left:770.3px;top:962.84px;font:normal 13px/13px 'Liberation Sans',sans-serif;color:#fff;white-space:nowrap;;-webkit-text-stroke:0.25px;letter-spacing:0.1px">Washer</div>
<div style="position:absolute;left:1.3px;width:1000px;text-align:right;top:962.84px;font:normal 13px/13px 'Liberation Sans',sans-serif;color:#fff;white-space:nowrap;;-webkit-text-stroke:0.25px;letter-spacing:0.1px">2</div>
<div style="position:absolute;left:257.8px;top:980.1px;width:771.5px;height:19.8px;background:#006400;"></div>
<div style="position:absolute;left:268.3px;top:984.2px;font:normal 13px/13px 'Liberation Sans',sans-serif;color:#fff;white-space:nowrap;;-webkit-text-stroke:0.25px;letter-spacing:0.1px">Engine Progra<span style="letter-spacing:1.4px">...</span></div>
<div style="position:absolute;left:393.3px;top:984.2px;font:normal 13px/13px 'Liberation Sans',sans-serif;color:#fff;white-space:nowrap;;-webkit-text-stroke:0.25px;letter-spacing:0.1px">Advance Medi<span style="letter-spacing:1.4px">...</span></div>
<div style="position:absolute;left:518.9px;top:984.2px;font:normal 13px/13px 'Liberation Sans',sans-serif;color:#fff;white-space:nowrap;;-webkit-text-stroke:0.25px;letter-spacing:0.1px">SPC043</div>
<div style="position:absolute;left:645.3px;top:984.2px;font:normal 13px/13px 'Liberation Sans',sans-serif;color:#fff;white-space:nowrap;;-webkit-text-stroke:0.25px;letter-spacing:0.1px">1303456</div>
<div style="position:absolute;left:770.3px;top:984.2px;font:normal 13px/13px 'Liberation Sans',sans-serif;color:#fff;white-space:nowrap;;-webkit-text-stroke:0.25px;letter-spacing:0.1px">Fastners</div>
<div style="position:absolute;left:1.3px;width:1000px;text-align:right;top:984.2px;font:normal 13px/13px 'Liberation Sans',sans-serif;color:#fff;white-space:nowrap;;-webkit-text-stroke:0.25px;letter-spacing:0.1px">2</div>
<div style="position:absolute;left:257.8px;top:1001.46px;width:771.5px;height:19.8px;background:#006400;"></div>
<div style="position:absolute;left:268.3px;top:1005.56px;font:normal 13px/13px 'Liberation Sans',sans-serif;color:#fff;white-space:nowrap;;-webkit-text-stroke:0.25px;letter-spacing:0.1px">Engine Progra<span style="letter-spacing:1.4px">...</span></div>
<div style="position:absolute;left:393.3px;top:1005.56px;font:normal 13px/13px 'Liberation Sans',sans-serif;color:#fff;white-space:nowrap;;-webkit-text-stroke:0.25px;letter-spacing:0.1px">Magna Cosma</div>
<div style="position:absolute;left:518.9px;top:1005.56px;font:normal 13px/13px 'Liberation Sans',sans-serif;color:#fff;white-space:nowrap;;-webkit-text-stroke:0.25px;letter-spacing:0.1px">SPC002</div>
<div style="position:absolute;left:645.3px;top:1005.56px;font:normal 13px/13px 'Liberation Sans',sans-serif;color:#fff;white-space:nowrap;;-webkit-text-stroke:0.25px;letter-spacing:0.1px">1803419</div>
<div style="position:absolute;left:770.3px;top:1005.56px;font:normal 13px/13px 'Liberation Sans',sans-serif;color:#fff;white-space:nowrap;;-webkit-text-stroke:0.25px;letter-spacing:0.1px">Stator</div>
<div style="position:absolute;left:1.3px;width:1000px;text-align:right;top:1005.56px;font:normal 13px/13px 'Liberation Sans',sans-serif;color:#fff;white-space:nowrap;;-webkit-text-stroke:0.25px;letter-spacing:0.1px">1</div>
<div style="position:absolute;left:257.8px;top:1022.82px;width:771.5px;height:19.8px;background:#006400;"></div>
<div style="position:absolute;left:268.3px;top:1026.92px;font:normal 13px/13px 'Liberation Sans',sans-serif;color:#fff;white-space:nowrap;;-webkit-text-stroke:0.25px;letter-spacing:0.1px">Engine Progra<span style="letter-spacing:1.4px">...</span></div>
<div style="position:absolute;left:393.3px;top:1026.92px;font:normal 13px/13px 'Liberation Sans',sans-serif;color:#fff;white-space:nowrap;;-webkit-text-stroke:0.25px;letter-spacing:0.1px">Magna Cosma</div>
<div style="position:absolute;left:518.9px;top:1026.92px;font:normal 13px/13px 'Liberation Sans',sans-serif;color:#fff;white-space:nowrap;;-webkit-text-stroke:0.25px;letter-spacing:0.1px">SPC002</div>
<div style="position:absolute;left:645.3px;top:1026.92px;font:normal 13px/13px 'Liberation Sans',sans-serif;color:#fff;white-space:nowrap;;-webkit-text-stroke:0.25px;letter-spacing:0.1px">1501098</div>
<div style="position:absolute;left:770.3px;top:1026.92px;font:normal 13px/13px 'Liberation Sans',sans-serif;color:#fff;white-space:nowrap;;-webkit-text-stroke:0.25px;letter-spacing:0.1px">Engine</div>
<div style="position:absolute;left:1.3px;width:1000px;text-align:right;top:1026.92px;font:normal 13px/13px 'Liberation Sans',sans-serif;color:#fff;white-space:nowrap;;-webkit-text-stroke:0.25px;letter-spacing:0.1px">0</div>
<div style="position:absolute;left:257.8px;top:1044.18px;width:771.5px;height:19.8px;background:#006400;"></div>
<div style="position:absolute;left:268.3px;top:1048.28px;font:normal 13px/13px 'Liberation Sans',sans-serif;color:#fff;white-space:nowrap;;-webkit-text-stroke:0.25px;letter-spacing:0.1px">Engine Progra<span style="letter-spacing:1.4px">...</span></div>
<div style="position:absolute;left:393.3px;top:1048.28px;font:normal 13px/13px 'Liberation Sans',sans-serif;color:#fff;white-space:nowrap;;-webkit-text-stroke:0.25px;letter-spacing:0.1px">Advanced Cos<span style="letter-spacing:1.4px">...</span></div>
<div style="position:absolute;left:518.9px;top:1048.28px;font:normal 13px/13px 'Liberation Sans',sans-serif;color:#fff;white-space:nowrap;;-webkit-text-stroke:0.25px;letter-spacing:0.1px">SPC044</div>
<div style="position:absolute;left:645.3px;top:1048.28px;font:normal 13px/13px 'Liberation Sans',sans-serif;color:#fff;white-space:nowrap;;-webkit-text-stroke:0.25px;letter-spacing:0.1px">1608565</div>
<div style="position:absolute;left:770.3px;top:1048.28px;font:normal 13px/13px 'Liberation Sans',sans-serif;color:#fff;white-space:nowrap;;-webkit-text-stroke:0.25px;letter-spacing:0.1px">Motor</div>
<div style="position:absolute;left:1.3px;width:1000px;text-align:right;top:1048.28px;font:normal 13px/13px 'Liberation Sans',sans-serif;color:#fff;white-space:nowrap;;-webkit-text-stroke:0.25px;letter-spacing:0.1px">2</div>
<div style="position:absolute;left:257.8px;top:935.58px;width:771.5px;height:1.8px;background:#002a00;"></div>
<div style="position:absolute;left:257.8px;top:956.94px;width:771.5px;height:1.8px;background:#002a00;"></div>
</div></div>
<div style="position:absolute;left:1049px;top:794px;width:697px;height:273.5px;background:#fff;"></div>
<div style="position:absolute;left:1065.5px;top:809px;width:5px;height:14.5px;background:#ff8c1a;"></div>
<div style="position:absolute;left:1076.3px;top:806.07px;font:bold 20px/20px 'Liberation Sans',sans-serif;color:#111;white-space:nowrap;">Risks</div>
<div style="position:absolute;left:1072.5px;top:933.8px;transform:rotate(-90deg);transform-origin:0 0;"><div style="position:absolute;left:-50px;width:100px;text-align:center;top:0;font:normal 13px/13px 'Liberation Sans',sans-serif;color:#222">Risks</div></div>
<div style="position:absolute;left:137.5px;width:1000px;text-align:right;top:882.17px;font:normal 13.5px/13.5px 'Liberation Sans',sans-serif;color:#222;white-space:nowrap;;-webkit-text-stroke:0.25px">3</div>
<div style="position:absolute;left:137.5px;width:1000px;text-align:right;top:915.17px;font:normal 13.5px/13.5px 'Liberation Sans',sans-serif;color:#222;white-space:nowrap;;-webkit-text-stroke:0.25px">2</div>
<div style="position:absolute;left:137.5px;width:1000px;text-align:right;top:947.87px;font:normal 13.5px/13.5px 'Liberation Sans',sans-serif;color:#222;white-space:nowrap;;-webkit-text-stroke:0.25px">1</div>
<div style="position:absolute;left:137.5px;width:1000px;text-align:right;top:971.37px;font:normal 13.5px/13.5px 'Liberation Sans',sans-serif;color:#222;white-space:nowrap;;-webkit-text-stroke:0.25px">0</div>
<div style="position:absolute;left:1141px;top:888.8px;width:5px;height:1.0px;background:#c8c8c8;"></div>
<div style="position:absolute;left:1141px;top:921.8px;width:5px;height:1.0px;background:#c8c8c8;"></div>
<div style="position:absolute;left:1141px;top:954.5px;width:5px;height:1.0px;background:#c8c8c8;"></div>
<div style="position:absolute;left:1146px;top:852.5px;width:1px;height:135.5px;background:#d4d4d4;"></div>
<div style="position:absolute;left:1140px;top:986.6px;width:606px;height:1.0px;background:#d0d0d0;"></div>
<div style="position:absolute;left:1169.5px;top:987.6px;width:1.0px;height:7.4px;background:#d0d0d0;"></div>
<div style="position:absolute;left:1240px;top:888.8px;width:506px;height:32.0px;background:#f99b1a;"></div>
<div style="position:absolute;left:1240px;top:923px;width:506px;height:30.8px;background:#45c472;"></div>
<div style="position:absolute;left:1240px;top:955.5px;width:506px;height:31.2px;background:#27a0e8;"></div>
<div style="position:absolute;left:1018.8px;width:1000px;text-align:center;top:868.37px;font:normal 13.5px/13.5px 'Liberation Sans',sans-serif;color:#111;white-space:nowrap;;-webkit-text-stroke:0.25px">3</div>
<div style="position:absolute;left:1018.8px;width:1000px;text-align:center;top:893.87px;font:normal 13.5px/13.5px 'Liberation Sans',sans-serif;color:#111;white-space:nowrap;;-webkit-text-stroke:0.25px">1</div>
<div style="position:absolute;left:1018.8px;width:1000px;text-align:center;top:926.37px;font:normal 13.5px/13.5px 'Liberation Sans',sans-serif;color:#111;white-space:nowrap;;-webkit-text-stroke:0.25px">1</div>
<div style="position:absolute;left:1018.8px;width:1000px;text-align:center;top:959.37px;font:normal 13.5px/13.5px 'Liberation Sans',sans-serif;color:#111;white-space:nowrap;;-webkit-text-stroke:0.25px">1</div>
<div style="position:absolute;left:1021px;width:1000px;text-align:center;top:995.6px;font:normal 13px/13px 'Liberation Sans',sans-serif;color:#1a1a1a;white-space:nowrap;letter-spacing:0.5px;-webkit-text-stroke:0.25px">Engine Program Heroic HX500</div>
<div style="position:absolute;left:994.5px;width:1000px;text-align:center;top:1031.37px;font:normal 13.5px/13.5px 'Liberation Sans',sans-serif;color:#000;white-space:nowrap;letter-spacing:-0.2px;-webkit-text-stroke:0.3px #000">Project</div>
<div style="position:absolute;left:242.5px;top:1071.25px;width:1503.5px;height:328.75px;background:#fff;"></div>
<div style="position:absolute;left:259px;top:1087.5px;width:5px;height:14.5px;background:#ff8c1a;"></div>
<div style="position:absolute;left:269.5px;top:1083.57px;font:bold 20px/20px 'Liberation Sans',sans-serif;color:#111;white-space:nowrap;">Elements</div>
<div style="position:absolute;left:268.3px;top:1133.15px;font:bold 14px/14px 'Liberation Sans',sans-serif;color:#111;white-space:nowrap;">Project</div>
<div style="position:absolute;left:516.75px;top:1133.15px;font:bold 14px/14px 'Liberation Sans',sans-serif;color:#111;white-space:nowrap;">Element</div>
<div style="position:absolute;left:758.75px;top:1133.15px;font:bold 14px/14px 'Liberation Sans',sans-serif;color:#111;white-space:nowrap;">Supplier</div>
<div style="position:absolute;left:884.25px;top:1133.15px;font:bold 14px/14px 'Liberation Sans',sans-serif;color:#111;white-space:nowrap;">Supplier Code</div>
<div style="position:absolute;left:1009.5px;top:1133.15px;font:bold 14px/14px 'Liberation Sans',sans-serif;color:#111;white-space:nowrap;">Part No</div>
<div style="position:absolute;left:1135px;top:1133.15px;font:bold 14px/14px 'Liberation Sans',sans-serif;color:#111;white-space:nowrap;">Part Family</div>
<div style="position:absolute;left:1386.25px;top:1133.15px;font:bold 14px/14px 'Liberation Sans',sans-serif;color:#111;white-space:nowrap;">Percentage<span style="letter-spacing:1.4px">...</span></div>
<div style="position:absolute;left:364.5px;width:1000px;text-align:right;top:1133.15px;font:bold 14px/14px 'Liberation Sans',sans-serif;color:#111;white-space:nowrap;">BOMLevel</div>
<div style="position:absolute;left:615px;width:1000px;text-align:right;top:1133.15px;font:bold 14px/14px 'Liberation Sans',sans-serif;color:#111;white-space:nowrap;">OnTime</div>
<div style="position:absolute;left:741.25px;width:1000px;text-align:right;top:1133.15px;font:bold 14px/14px 'Liberation Sans',sans-serif;color:#111;white-space:nowrap;">Quality</div>
<div style="position:absolute;left:505.75px;top:1130px;width:1.0px;height:19px;background:#e6e6e6;"></div>
<div style="position:absolute;left:747px;top:1130px;width:1px;height:19px;background:#e6e6e6;"></div>
<div style="position:absolute;left:872.5px;top:1130px;width:1.0px;height:19px;background:#e6e6e6;"></div>
<div style="position:absolute;left:998.75px;top:1130px;width:1.0px;height:19px;background:#e6e6e6;"></div>
<div style="position:absolute;left:1124.25px;top:1130px;width:1.0px;height:19px;background:#e6e6e6;"></div>
<div style="position:absolute;left:1250px;top:1130px;width:1px;height:19px;background:#e6e6e6;"></div>
<div style="position:absolute;left:1375px;top:1130px;width:1px;height:19px;background:#e6e6e6;"></div>
<div style="position:absolute;left:1500.75px;top:1130px;width:1.0px;height:19px;background:#e6e6e6;"></div>
<div style="position:absolute;left:1626.25px;top:1130px;width:1.0px;height:19px;background:#e6e6e6;"></div>
<svg style="position:absolute;left:727px;top:1138.5px" width="11" height="6" viewBox="0 0 11 6"><path d="M0.5,5.5 L5.5,0.5 L10.5,5.5 Z" fill="#555"/></svg>
<div style="position:absolute;left:257.5px;top:1149.6px;width:1488.5px;height:2.0px;background:#2a2a2a;"></div>
<div style="position:absolute;left:257.5px;top:1170.8px;width:1488.5px;height:2.0px;background:#2a2a2a;"></div>
<div style="position:absolute;left:268.3px;top:1155.2px;font:normal 13px/13px 'Liberation Sans',sans-serif;color:#111;white-space:nowrap;;-webkit-text-stroke:0.25px;letter-spacing:0.1px">Engine Program Heroic HX500</div>
<div style="position:absolute;left:516.75px;top:1155.2px;font:normal 13px/13px 'Liberation Sans',sans-serif;color:#111;white-space:nowrap;;-webkit-text-stroke:0.25px;letter-spacing:0.1px">Design Failure Mode and Effects<span style="letter-spacing:1.4px">...</span></div>
<div style="position:absolute;left:758.3px;top:1155.2px;font:normal 13px/13px 'Liberation Sans',sans-serif;color:#111;white-space:nowrap;;-webkit-text-stroke:0.25px;letter-spacing:0.1px">InHouse</div>
<div style="position:absolute;left:883.5px;top:1155.2px;font:normal 13px/13px 'Liberation Sans',sans-serif;color:#111;white-space:nowrap;;-webkit-text-stroke:0.25px;letter-spacing:0.1px">InHouse</div>
<div style="position:absolute;left:1009.3px;top:1155.2px;font:normal 13px/13px 'Liberation Sans',sans-serif;color:#111;white-space:nowrap;;-webkit-text-stroke:0.25px;letter-spacing:0.1px">1501098</div>
<div style="position:absolute;left:1134.5px;top:1155.2px;font:normal 13px/13px 'Liberation Sans',sans-serif;color:#111;white-space:nowrap;;-webkit-text-stroke:0.25px;letter-spacing:0.1px">Engine</div>
<div style="position:absolute;left:365.5px;width:1000px;text-align:right;top:1155.2px;font:normal 13px/13px 'Liberation Sans',sans-serif;color:#111;white-space:nowrap;;-webkit-text-stroke:0.25px;letter-spacing:0.1px">0</div>
<div style="position:absolute;left:490.75px;width:1000px;text-align:right;top:1155.2px;font:normal 13px/13px 'Liberation Sans',sans-serif;color:#111;white-space:nowrap;;-webkit-text-stroke:0.25px;letter-spacing:0.1px">100.00</div>
<div style="position:absolute;left:616.75px;width:1000px;text-align:right;top:1155.2px;font:normal 13px/13px 'Liberation Sans',sans-serif;color:#111;white-space:nowrap;;-webkit-text-stroke:0.25px;letter-spacing:0.1px">8</div>
<div style="position:absolute;left:742.5px;width:1000px;text-align:right;top:1155.2px;font:normal 13px/13px 'Liberation Sans',sans-serif;color:#111;white-space:nowrap;;-webkit-text-stroke:0.25px;letter-spacing:0.1px">8</div>
<div style="position:absolute;left:257.5px;top:1193.35px;width:1488.5px;height:1.0px;background:#ececec;"></div>
<div style="position:absolute;left:268.3px;top:1176.55px;font:normal 13px/13px 'Liberation Sans',sans-serif;color:#111;white-space:nowrap;;-webkit-text-stroke:0.25px;letter-spacing:0.1px">Engine Program Heroic HX500</div>
<div style="position:absolute;left:516.75px;top:1176.55px;font:normal 13px/13px 'Liberation Sans',sans-serif;color:#111;white-space:nowrap;;-webkit-text-stroke:0.25px;letter-spacing:0.1px">Design Failure Mode and Effects<span style="letter-spacing:1.4px">...</span></div>
<div style="position:absolute;left:758.3px;top:1176.55px;font:normal 13px/13px 'Liberation Sans',sans-serif;color:#111;white-space:nowrap;;-webkit-text-stroke:0.25px;letter-spacing:0.1px">Magna Intier</div>
<div style="position:absolute;left:883.5px;top:1176.55px;font:normal 13px/13px 'Liberation Sans',sans-serif;color:#111;white-space:nowrap;;-webkit-text-stroke:0.25px;letter-spacing:0.1px">SPC001</div>
<div style="position:absolute;left:1009.3px;top:1176.55px;font:normal 13px/13px 'Liberation Sans',sans-serif;color:#111;white-space:nowrap;;-webkit-text-stroke:0.25px;letter-spacing:0.1px">1509679</div>
<div style="position:absolute;left:1134.5px;top:1176.55px;font:normal 13px/13px 'Liberation Sans',sans-serif;color:#111;white-space:nowrap;;-webkit-text-stroke:0.25px;letter-spacing:0.1px">Valve</div>
<div style="position:absolute;left:365.5px;width:1000px;text-align:right;top:1176.55px;font:normal 13px/13px 'Liberation Sans',sans-serif;color:#111;white-space:nowrap;;-webkit-text-stroke:0.25px;letter-spacing:0.1px">1</div>
<div style="position:absolute;left:490.75px;width:1000px;text-align:right;top:1176.55px;font:normal 13px/13px 'Liberation Sans',sans-serif;color:#111;white-space:nowrap;;-webkit-text-stroke:0.25px;letter-spacing:0.1px">99.00</div>
<div style="position:absolute;left:616.75px;width:1000px;text-align:right;top:1176.55px;font:normal 13px/13px 'Liberation Sans',sans-serif;color:#111;white-space:nowrap;;-webkit-text-stroke:0.25px;letter-spacing:0.1px">0</div>
<div style="position:absolute;left:742.5px;width:1000px;text-align:right;top:1176.55px;font:normal 13px/13px 'Liberation Sans',sans-serif;color:#111;white-space:nowrap;;-webkit-text-stroke:0.25px;letter-spacing:0.1px">1</div>
<div style="position:absolute;left:257.5px;top:1214.7px;width:1488.5px;height:1.0px;background:#ececec;"></div>
<div style="position:absolute;left:268.3px;top:1197.9px;font:normal 13px/13px 'Liberation Sans',sans-serif;color:#111;white-space:nowrap;;-webkit-text-stroke:0.25px;letter-spacing:0.1px">Engine Program Heroic HX500</div>
<div style="position:absolute;left:516.75px;top:1197.9px;font:normal 13px/13px 'Liberation Sans',sans-serif;color:#111;white-space:nowrap;;-webkit-text-stroke:0.25px;letter-spacing:0.1px">Design Failure Mode and Effects<span style="letter-spacing:1.4px">...</span></div>
<div style="position:absolute;left:758.3px;top:1197.9px;font:normal 13px/13px 'Liberation Sans',sans-serif;color:#111;white-space:nowrap;;-webkit-text-stroke:0.25px;letter-spacing:0.1px">ADL Insulflex</div>
<div style="position:absolute;left:883.5px;top:1197.9px;font:normal 13px/13px 'Liberation Sans',sans-serif;color:#111;white-space:nowrap;;-webkit-text-stroke:0.25px;letter-spacing:0.1px">SPC041</div>
<div style="position:absolute;left:1009.3px;top:1197.9px;font:normal 13px/13px 'Liberation Sans',sans-serif;color:#111;white-space:nowrap;;-webkit-text-stroke:0.25px;letter-spacing:0.1px">1308908</div>
<div style="position:absolute;left:1134.5px;top:1197.9px;font:normal 13px/13px 'Liberation Sans',sans-serif;color:#111;white-space:nowrap;;-webkit-text-stroke:0.25px;letter-spacing:0.1px">Shaft</div>
<div style="position:absolute;left:365.5px;width:1000px;text-align:right;top:1197.9px;font:normal 13px/13px 'Liberation Sans',sans-serif;color:#111;white-space:nowrap;;-webkit-text-stroke:0.25px;letter-spacing:0.1px">2</div>
<div style="position:absolute;left:490.75px;width:1000px;text-align:right;top:1197.9px;font:normal 13px/13px 'Liberation Sans',sans-serif;color:#111;white-space:nowrap;;-webkit-text-stroke:0.25px;letter-spacing:0.1px">0.00</div>
<div style="position:absolute;left:616.75px;width:1000px;text-align:right;top:1197.9px;font:normal 13px/13px 'Liberation Sans',sans-serif;color:#111;white-space:nowrap;;-webkit-text-stroke:0.25px;letter-spacing:0.1px">0</div>
<div style="position:absolute;left:742.5px;width:1000px;text-align:right;top:1197.9px;font:normal 13px/13px 'Liberation Sans',sans-serif;color:#111;white-space:nowrap;;-webkit-text-stroke:0.25px;letter-spacing:0.1px">0</div>
<div style="position:absolute;left:257.5px;top:1236.05px;width:1488.5px;height:1.0px;background:#ececec;"></div>
<div style="position:absolute;left:268.3px;top:1219.25px;font:normal 13px/13px 'Liberation Sans',sans-serif;color:#111;white-space:nowrap;;-webkit-text-stroke:0.25px;letter-spacing:0.1px">Engine Program Heroic HX500</div>
<div style="position:absolute;left:516.75px;top:1219.25px;font:normal 13px/13px 'Liberation Sans',sans-serif;color:#111;white-space:nowrap;;-webkit-text-stroke:0.25px;letter-spacing:0.1px">Design Failure Mode and Effects<span style="letter-spacing:1.4px">...</span></div>
<div style="position:absolute;left:758.3px;top:1219.25px;font:normal 13px/13px 'Liberation Sans',sans-serif;color:#111;white-space:nowrap;;-webkit-text-stroke:0.25px;letter-spacing:0.1px">Adrian Steel</div>
<div style="position:absolute;left:883.5px;top:1219.25px;font:normal 13px/13px 'Liberation Sans',sans-serif;color:#111;white-space:nowrap;;-webkit-text-stroke:0.25px;letter-spacing:0.1px">SPC042</div>
<div style="position:absolute;left:1009.3px;top:1219.25px;font:normal 13px/13px 'Liberation Sans',sans-serif;color:#111;white-space:nowrap;;-webkit-text-stroke:0.25px;letter-spacing:0.1px">1304569</div>
<div style="position:absolute;left:1134.5px;top:1219.25px;font:normal 13px/13px 'Liberation Sans',sans-serif;color:#111;white-space:nowrap;;-webkit-text-stroke:0.25px;letter-spacing:0.1px">Washer</div>
<div style="position:absolute;left:365.5px;width:1000px;text-align:right;top:1219.25px;font:normal 13px/13px 'Liberation Sans',sans-serif;color:#111;white-space:nowrap;;-webkit-text-stroke:0.25px;letter-spacing:0.1px">2</div>
<div style="position:absolute;left:490.75px;width:1000px;text-align:right;top:1219.25px;font:normal 13px/13px 'Liberation Sans',sans-serif;color:#111;white-space:nowrap;;-webkit-text-stroke:0.25px;letter-spacing:0.1px">100.00</div>
<div style="position:absolute;left:616.75px;width:1000px;text-align:right;top:1219.25px;font:normal 13px/13px 'Liberation Sans',sans-serif;color:#111;white-space:nowrap;;-webkit-text-stroke:0.25px;letter-spacing:0.1px">4</div>
<div style="position:absolute;left:742.5px;width:1000px;text-align:right;top:1219.25px;font:normal 13px/13px 'Liberation Sans',sans-serif;color:#111;white-space:nowrap;;-webkit-text-stroke:0.25px;letter-spacing:0.1px">7</div>
<div style="position:absolute;left:257.5px;top:1257.4px;width:1488.5px;height:1.0px;background:#ececec;"></div>
<div style="position:absolute;left:268.3px;top:1240.6px;font:normal 13px/13px 'Liberation Sans',sans-serif;color:#111;white-space:nowrap;;-webkit-text-stroke:0.25px;letter-spacing:0.1px">Engine Program Heroic HX500</div>
<div style="position:absolute;left:516.75px;top:1240.6px;font:normal 13px/13px 'Liberation Sans',sans-serif;color:#111;white-space:nowrap;;-webkit-text-stroke:0.25px;letter-spacing:0.1px">Design Failure Mode and Effects<span style="letter-spacing:1.4px">...</span></div>
<div style="position:absolute;left:758.3px;top:1240.6px;font:normal 13px/13px 'Liberation Sans',sans-serif;color:#111;white-space:nowrap;;-webkit-text-stroke:0.25px;letter-spacing:0.1px">Advance Medi<span style="letter-spacing:1.4px">...</span></div>
<div style="position:absolute;left:883.5px;top:1240.6px;font:normal 13px/13px 'Liberation Sans',sans-serif;color:#111;white-space:nowrap;;-webkit-text-stroke:0.25px;letter-spacing:0.1px">SPC043</div>
<div style="position:absolute;left:1009.3px;top:1240.6px;font:normal 13px/13px 'Liberation Sans',sans-serif;color:#111;white-space:nowrap;;-webkit-text-stroke:0.25px;letter-spacing:0.1px">1303456</div>
<div style="position:absolute;left:1134.5px;top:1240.6px;font:normal 13px/13px 'Liberation Sans',sans-serif;color:#111;white-space:nowrap;;-webkit-text-stroke:0.25px;letter-spacing:0.1px">Fastners</div>
<div style="position:absolute;left:365.5px;width:1000px;text-align:right;top:1240.6px;font:normal 13px/13px 'Liberation Sans',sans-serif;color:#111;white-space:nowrap;;-webkit-text-stroke:0.25px;letter-spacing:0.1px">2</div>
<div style="position:absolute;left:490.75px;width:1000px;text-align:right;top:1240.6px;font:normal 13px/13px 'Liberation Sans',sans-serif;color:#111;white-space:nowrap;;-webkit-text-stroke:0.25px;letter-spacing:0.1px">100.00</div>
<div style="position:absolute;left:616.75px;width:1000px;text-align:right;top:1240.6px;font:normal 13px/13px 'Liberation Sans',sans-serif;color:#111;white-space:nowrap;;-webkit-text-stroke:0.25px;letter-spacing:0.1px">8</div>
<div style="position:absolute;left:742.5px;width:1000px;text-align:right;top:1240.6px;font:normal 13px/13px 'Liberation Sans',sans-serif;color:#111;white-space:nowrap;;-webkit-text-stroke:0.25px;letter-spacing:0.1px">4</div>
<div style="position:absolute;left:257.5px;top:1278.75px;width:1488.5px;height:1.0px;background:#ececec;"></div>
<div style="position:absolute;left:268.3px;top:1261.95px;font:normal 13px/13px 'Liberation Sans',sans-serif;color:#111;white-space:nowrap;;-webkit-text-stroke:0.25px;letter-spacing:0.1px">Engine Program Heroic HX500</div>
<div style="position:absolute;left:516.75px;top:1261.95px;font:normal 13px/13px 'Liberation Sans',sans-serif;color:#111;white-space:nowrap;;-webkit-text-stroke:0.25px;letter-spacing:0.1px">Design Failure Mode and Effects<span style="letter-spacing:1.4px">...</span></div>
<div style="position:absolute;left:758.3px;top:1261.95px;font:normal 13px/13px 'Liberation Sans',sans-serif;color:#111;white-space:nowrap;;-webkit-text-stroke:0.25px;letter-spacing:0.1px">Magna Cosma</div>
<div style="position:absolute;left:883.5px;top:1261.95px;font:normal 13px/13px 'Liberation Sans',sans-serif;color:#111;white-space:nowrap;;-webkit-text-stroke:0.25px;letter-spacing:0.1px">SPC002</div>
<div style="position:absolute;left:1009.3px;top:1261.95px;font:normal 13px/13px 'Liberation Sans',sans-serif;color:#111;white-space:nowrap;;-webkit-text-stroke:0.25px;letter-spacing:0.1px">1803419</div>
<div style="position:absolute;left:1134.5px;top:1261.95px;font:normal 13px/13px 'Liberation Sans',sans-serif;color:#111;white-space:nowrap;;-webkit-text-stroke:0.25px;letter-spacing:0.1px">Stator</div>
<div style="position:absolute;left:365.5px;width:1000px;text-align:right;top:1261.95px;font:normal 13px/13px 'Liberation Sans',sans-serif;color:#111;white-space:nowrap;;-webkit-text-stroke:0.25px;letter-spacing:0.1px">1</div>
<div style="position:absolute;left:490.75px;width:1000px;text-align:right;top:1261.95px;font:normal 13px/13px 'Liberation Sans',sans-serif;color:#111;white-space:nowrap;;-webkit-text-stroke:0.25px;letter-spacing:0.1px">100.00</div>
<div style="position:absolute;left:616.75px;width:1000px;text-align:right;top:1261.95px;font:normal 13px/13px 'Liberation Sans',sans-serif;color:#111;white-space:nowrap;;-webkit-text-stroke:0.25px;letter-spacing:0.1px">8</div>
<div style="position:absolute;left:742.5px;width:1000px;text-align:right;top:1261.95px;font:normal 13px/13px 'Liberation Sans',sans-serif;color:#111;white-space:nowrap;;-webkit-text-stroke:0.25px;letter-spacing:0.1px">4</div>
<div style="position:absolute;left:257.5px;top:1300.1px;width:1488.5px;height:1.0px;background:#ececec;"></div>
<div style="position:absolute;left:268.3px;top:1283.3px;font:normal 13px/13px 'Liberation Sans',sans-serif;color:#111;white-space:nowrap;;-webkit-text-stroke:0.25px;letter-spacing:0.1px">Engine Program Heroic HX500</div>
<div style="position:absolute;left:516.75px;top:1283.3px;font:normal 13px/13px 'Liberation Sans',sans-serif;color:#111;white-space:nowrap;;-webkit-text-stroke:0.25px;letter-spacing:0.1px">Design Failure Mode and Effects<span style="letter-spacing:1.4px">...</span></div>
<div style="position:absolute;left:758.3px;top:1283.3px;font:normal 13px/13px 'Liberation Sans',sans-serif;color:#111;white-space:nowrap;;-webkit-text-stroke:0.25px;letter-spacing:0.1px">Advanced Cos<span style="letter-spacing:1.4px">...</span></div>
<div style="position:absolute;left:883.5px;top:1283.3px;font:normal 13px/13px 'Liberation Sans',sans-serif;color:#111;white-space:nowrap;;-webkit-text-stroke:0.25px;letter-spacing:0.1px">SPC044</div>
<div style="position:absolute;left:1009.3px;top:1283.3px;font:normal 13px/13px 'Liberation Sans',sans-serif;color:#111;white-space:nowrap;;-webkit-text-stroke:0.25px;letter-spacing:0.1px">1608565</div>
<div style="position:absolute;left:1134.5px;top:1283.3px;font:normal 13px/13px 'Liberation Sans',sans-serif;color:#111;white-space:nowrap;;-webkit-text-stroke:0.25px;letter-spacing:0.1px">Motor</div>
<div style="position:absolute;left:365.5px;width:1000px;text-align:right;top:1283.3px;font:normal 13px/13px 'Liberation Sans',sans-serif;color:#111;white-space:nowrap;;-webkit-text-stroke:0.25px;letter-spacing:0.1px">2</div>
<div style="position:absolute;left:490.75px;width:1000px;text-align:right;top:1283.3px;font:normal 13px/13px 'Liberation Sans',sans-serif;color:#111;white-space:nowrap;;-webkit-text-stroke:0.25px;letter-spacing:0.1px">100.00</div>
<div style="position:absolute;left:616.75px;width:1000px;text-align:right;top:1283.3px;font:normal 13px/13px 'Liberation Sans',sans-serif;color:#111;white-space:nowrap;;-webkit-text-stroke:0.25px;letter-spacing:0.1px">4</div>
<div style="position:absolute;left:742.5px;width:1000px;text-align:right;top:1283.3px;font:normal 13px/13px 'Liberation Sans',sans-serif;color:#111;white-space:nowrap;;-webkit-text-stroke:0.25px;letter-spacing:0.1px">7</div>
<div style="position:absolute;left:257.5px;top:1321.45px;width:1488.5px;height:1.0px;background:#ececec;"></div>
<div style="position:absolute;left:268.3px;top:1304.65px;font:normal 13px/13px 'Liberation Sans',sans-serif;color:#111;white-space:nowrap;;-webkit-text-stroke:0.25px;letter-spacing:0.1px">Engine Program Heroic HX500</div>
<div style="position:absolute;left:516.75px;top:1304.65px;font:normal 13px/13px 'Liberation Sans',sans-serif;color:#111;white-space:nowrap;;-webkit-text-stroke:0.25px;letter-spacing:0.1px">Design Failure Mode and Effects<span style="letter-spacing:1.4px">...</span></div>
<div style="position:absolute;left:758.3px;top:1304.65px;font:normal 13px/13px 'Liberation Sans',sans-serif;color:#111;white-space:nowrap;;-webkit-text-stroke:0.25px;letter-spacing:0.1px">Advics Mfg Ind<span style="letter-spacing:1.4px">...</span></div>
<div style="position:absolute;left:883.5px;top:1304.65px;font:normal 13px/13px 'Liberation Sans',sans-serif;color:#111;white-space:nowrap;;-webkit-text-stroke:0.25px;letter-spacing:0.1px">SPC045</div>
<div style="position:absolute;left:1009.3px;top:1304.65px;font:normal 13px/13px 'Liberation Sans',sans-serif;color:#111;white-space:nowrap;;-webkit-text-stroke:0.25px;letter-spacing:0.1px">1699876</div>
<div style="position:absolute;left:1134.5px;top:1304.65px;font:normal 13px/13px 'Liberation Sans',sans-serif;color:#111;white-space:nowrap;;-webkit-text-stroke:0.25px;letter-spacing:0.1px">Clutch</div>
<div style="position:absolute;left:365.5px;width:1000px;text-align:right;top:1304.65px;font:normal 13px/13px 'Liberation Sans',sans-serif;color:#111;white-space:nowrap;;-webkit-text-stroke:0.25px;letter-spacing:0.1px">2</div>
<div style="position:absolute;left:490.75px;width:1000px;text-align:right;top:1304.65px;font:normal 13px/13px 'Liberation Sans',sans-serif;color:#111;white-space:nowrap;;-webkit-text-stroke:0.25px;letter-spacing:0.1px">100.00</div>
<div style="position:absolute;left:616.75px;width:1000px;text-align:right;top:1304.65px;font:normal 13px/13px 'Liberation Sans',sans-serif;color:#111;white-space:nowrap;;-webkit-text-stroke:0.25px;letter-spacing:0.1px">8</div>
<div style="position:absolute;left:742.5px;width:1000px;text-align:right;top:1304.65px;font:normal 13px/13px 'Liberation Sans',sans-serif;color:#111;white-space:nowrap;;-webkit-text-stroke:0.25px;letter-spacing:0.1px">4</div>
<div style="position:absolute;left:257.5px;top:1342.8px;width:1488.5px;height:1.0px;background:#ececec;"></div>
<div style="position:absolute;left:268.3px;top:1326.0px;font:normal 13px/13px 'Liberation Sans',sans-serif;color:#111;white-space:nowrap;;-webkit-text-stroke:0.25px;letter-spacing:0.1px">Engine Program Heroic HX500</div>
<div style="position:absolute;left:516.75px;top:1326.0px;font:normal 13px/13px 'Liberation Sans',sans-serif;color:#111;white-space:nowrap;;-webkit-text-stroke:0.25px;letter-spacing:0.1px">Design Failure Mode and Effects<span style="letter-spacing:1.4px">...</span></div>
<div style="position:absolute;left:758.3px;top:1326.0px;font:normal 13px/13px 'Liberation Sans',sans-serif;color:#111;white-space:nowrap;;-webkit-text-stroke:0.25px;letter-spacing:0.1px">AECOM</div>
<div style="position:absolute;left:883.5px;top:1326.0px;font:normal 13px/13px 'Liberation Sans',sans-serif;color:#111;white-space:nowrap;;-webkit-text-stroke:0.25px;letter-spacing:0.1px">SPC046</div>
<div style="position:absolute;left:1009.3px;top:1326.0px;font:normal 13px/13px 'Liberation Sans',sans-serif;color:#111;white-space:nowrap;;-webkit-text-stroke:0.25px;letter-spacing:0.1px">1605878</div>
<div style="position:absolute;left:1134.5px;top:1326.0px;font:normal 13px/13px 'Liberation Sans',sans-serif;color:#111;white-space:nowrap;;-webkit-text-stroke:0.25px;letter-spacing:0.1px">Gear</div>
<div style="position:absolute;left:365.5px;width:1000px;text-align:right;top:1326.0px;font:normal 13px/13px 'Liberation Sans',sans-serif;color:#111;white-space:nowrap;;-webkit-text-stroke:0.25px;letter-spacing:0.1px">2</div>
<div style="position:absolute;left:490.75px;width:1000px;text-align:right;top:1326.0px;font:normal 13px/13px 'Liberation Sans',sans-serif;color:#111;white-space:nowrap;;-webkit-text-stroke:0.25px;letter-spacing:0.1px">100.00</div>
<div style="position:absolute;left:616.75px;width:1000px;text-align:right;top:1326.0px;font:normal 13px/13px 'Liberation Sans',sans-serif;color:#111;white-space:nowrap;;-webkit-text-stroke:0.25px;letter-spacing:0.1px">4</div>
<div style="position:absolute;left:742.5px;width:1000px;text-align:right;top:1326.0px;font:normal 13px/13px 'Liberation Sans',sans-serif;color:#111;white-space:nowrap;;-webkit-text-stroke:0.25px;letter-spacing:0.1px">7</div>
<div style="position:absolute;left:257.5px;top:1364.15px;width:1488.5px;height:1.0px;background:#ececec;"></div>
<div style="position:absolute;left:268.3px;top:1347.35px;font:normal 13px/13px 'Liberation Sans',sans-serif;color:#111;white-space:nowrap;;-webkit-text-stroke:0.25px;letter-spacing:0.1px">Engine Program Heroic HX500</div>
<div style="position:absolute;left:516.75px;top:1347.35px;font:normal 13px/13px 'Liberation Sans',sans-serif;color:#111;white-space:nowrap;;-webkit-text-stroke:0.25px;letter-spacing:0.1px">Design Failure Mode and Effects<span style="letter-spacing:1.4px">...</span></div>
<div style="position:absolute;left:758.3px;top:1347.35px;font:normal 13px/13px 'Liberation Sans',sans-serif;color:#111;white-space:nowrap;;-webkit-text-stroke:0.25px;letter-spacing:0.1px">Advanced P<span style="letter-spacing:1.4px">...</span></div>
<div style="position:absolute;left:883.5px;top:1347.35px;font:normal 13px/13px 'Liberation Sans',sans-serif;color:#111;white-space:nowrap;;-webkit-text-stroke:0.25px;letter-spacing:0.1px">SPC004</div>
<div style="position:absolute;left:1009.3px;top:1347.35px;font:normal 13px/13px 'Liberation Sans',sans-serif;color:#111;white-space:nowrap;;-webkit-text-stroke:0.25px;letter-spacing:0.1px">1503248</div>
<div style="position:absolute;left:1134.5px;top:1347.35px;font:normal 13px/13px 'Liberation Sans',sans-serif;color:#111;white-space:nowrap;;-webkit-text-stroke:0.25px;letter-spacing:0.1px">Belt</div>
<div style="position:absolute;left:365.5px;width:1000px;text-align:right;top:1347.35px;font:normal 13px/13px 'Liberation Sans',sans-serif;color:#111;white-space:nowrap;;-webkit-text-stroke:0.25px;letter-spacing:0.1px">1</div>
<div style="position:absolute;left:490.75px;width:1000px;text-align:right;top:1347.35px;font:normal 13px/13px 'Liberation Sans',sans-serif;color:#111;white-space:nowrap;;-webkit-text-stroke:0.25px;letter-spacing:0.1px">100.00</div>
<div style="position:absolute;left:616.75px;width:1000px;text-align:right;top:1347.35px;font:normal 13px/13px 'Liberation Sans',sans-serif;color:#111;white-space:nowrap;;-webkit-text-stroke:0.25px;letter-spacing:0.1px">8</div>
<div style="position:absolute;left:742.5px;width:1000px;text-align:right;top:1347.35px;font:normal 13px/13px 'Liberation Sans',sans-serif;color:#111;white-space:nowrap;;-webkit-text-stroke:0.25px;letter-spacing:0.1px">10</div>
</div></div>
<div style="position:absolute;left:100px;top:734px;width:1655px;height:2.2px;background:#f9f9f9;"></div>
<div style="position:absolute;left:100px;top:738px;width:1655px;height:3px;background:#f1f1f1;"></div>
<div style="position:absolute;left:100px;top:734.4px;width:80.6px;height:2.1px;background:#3fa1e6;"></div>
<div style="position:absolute;left:180.6px;top:736.2px;width:1574.4px;height:1.8px;background:#d2d2d2;"></div>
<div style="position:absolute;left:327.6px;top:734px;width:1.0px;height:2.1px;background:#cfcfcf;"></div>
<div style="position:absolute;left:1747px;top:738px;width:8px;height:617.5px;background:#f0f0f0;"></div>
<div style="position:absolute;left:1748px;top:1017.6px;width:7px;height:217.9px;background:#c9c9c9;"></div>
<svg style="position:absolute;left:1748px;top:764px" width="7" height="10" viewBox="0 0 7 10"><path d="M1,7 L5,2.5 L7,2.5 L7,4 L3,8 Z" fill="#555"/></svg>
<svg style="position:absolute;left:1748px;top:1317px" width="7" height="10" viewBox="0 0 7 10"><path d="M1,2 L5,6.5 L7,6.5 L7,5 L3,1 Z" fill="#555"/></svg>
<div style="position:absolute;left:100px;top:1351.5px;width:1655px;height:4.0px;background:#ededed;"></div>
<div style="position:absolute;left:143px;top:1351.5px;width:1409.5px;height:4.0px;background:#c9c9c9;"></div>
<div style="position:absolute;left:128px;top:1354px;width:5px;height:1.5px;background:#777;"></div>
<div style="position:absolute;left:1714.5px;top:1354px;width:5.0px;height:1.5px;background:#777;"></div>
</div></div>
</body></html>
